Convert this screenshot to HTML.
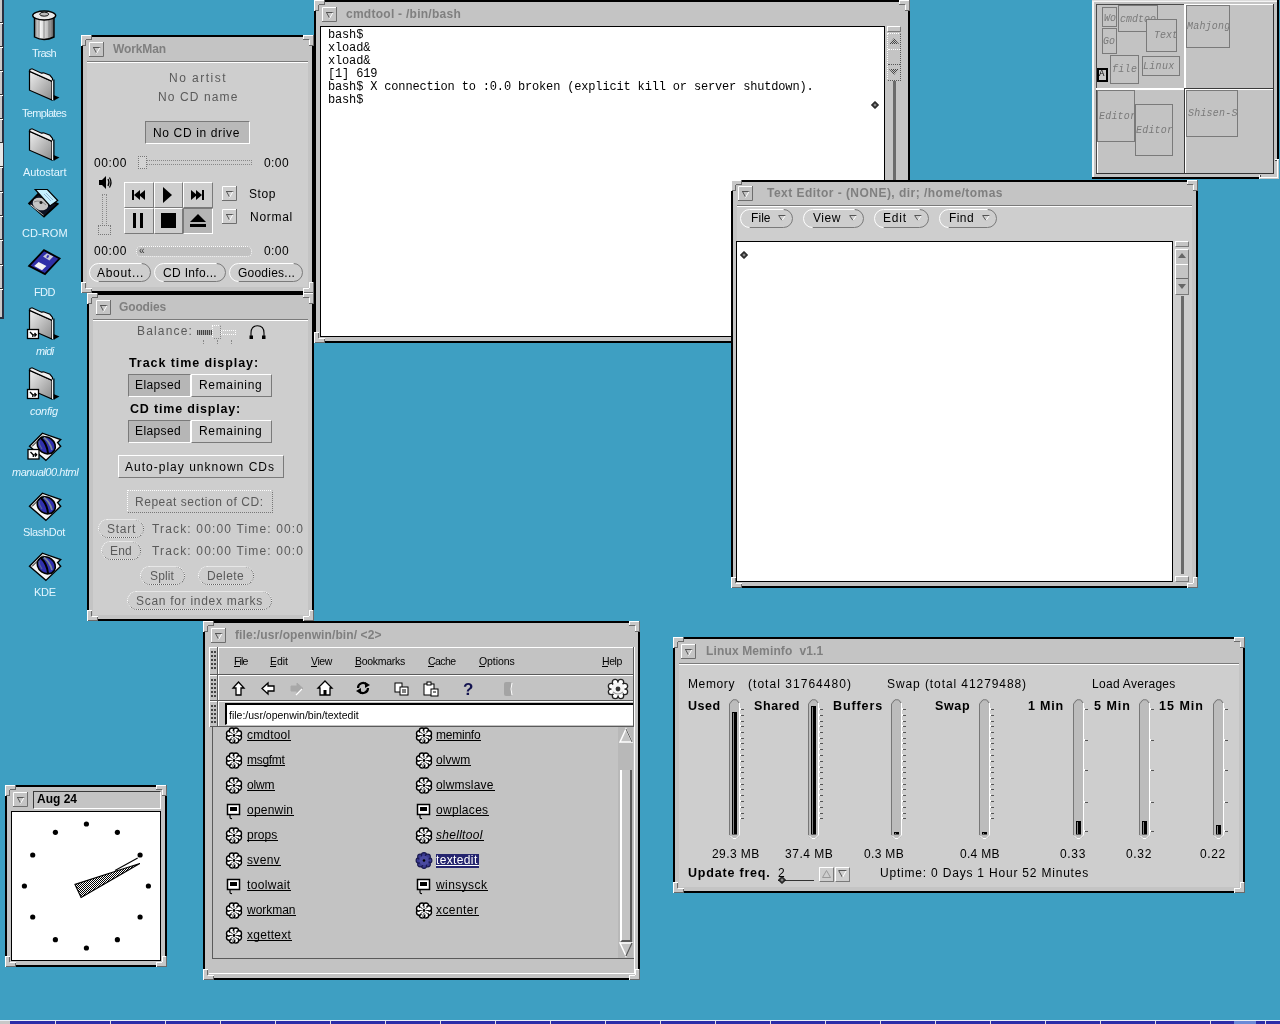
<!DOCTYPE html>
<html><head><meta charset="utf-8"><title>desktop</title>
<style>
html,body{margin:0;padding:0;}
body{width:1280px;height:1024px;overflow:hidden;position:relative;background:#3e9fc2;font-family:"Liberation Sans",sans-serif;}
.a{position:absolute;}
.t{position:absolute;white-space:pre;line-height:1;will-change:transform;}
svg.a{overflow:visible;}
</style></head><body>
<div class="a" style="left:0px;top:0px;width:3px;height:318px;background:#c9c9c9"></div><div class="a" style="left:2px;top:0px;width:2px;height:318px;background:#2a3040"></div><div class="a" style="left:0px;top:22px;width:3px;height:1px;background:#333"></div><div class="a" style="left:0px;top:23px;width:3px;height:1px;background:#fff"></div><div class="a" style="left:0px;top:46px;width:3px;height:1px;background:#333"></div><div class="a" style="left:0px;top:47px;width:3px;height:1px;background:#fff"></div><div class="a" style="left:0px;top:70px;width:3px;height:1px;background:#333"></div><div class="a" style="left:0px;top:71px;width:3px;height:1px;background:#fff"></div><div class="a" style="left:0px;top:94px;width:3px;height:1px;background:#333"></div><div class="a" style="left:0px;top:95px;width:3px;height:1px;background:#fff"></div><div class="a" style="left:0px;top:118px;width:3px;height:1px;background:#333"></div><div class="a" style="left:0px;top:119px;width:3px;height:1px;background:#fff"></div><div class="a" style="left:0px;top:142px;width:3px;height:1px;background:#333"></div><div class="a" style="left:0px;top:143px;width:3px;height:1px;background:#fff"></div><div class="a" style="left:0px;top:166px;width:3px;height:1px;background:#333"></div><div class="a" style="left:0px;top:167px;width:3px;height:1px;background:#fff"></div><div class="a" style="left:0px;top:191px;width:3px;height:1px;background:#333"></div><div class="a" style="left:0px;top:192px;width:3px;height:1px;background:#fff"></div><div class="a" style="left:0px;top:215px;width:3px;height:1px;background:#333"></div><div class="a" style="left:0px;top:216px;width:3px;height:1px;background:#fff"></div><div class="a" style="left:0px;top:239px;width:3px;height:1px;background:#333"></div><div class="a" style="left:0px;top:240px;width:3px;height:1px;background:#fff"></div><div class="a" style="left:0px;top:264px;width:3px;height:1px;background:#333"></div><div class="a" style="left:0px;top:265px;width:3px;height:1px;background:#fff"></div><div class="a" style="left:0px;top:288px;width:3px;height:1px;background:#333"></div><div class="a" style="left:0px;top:289px;width:3px;height:1px;background:#fff"></div><div class="a" style="left:0px;top:143px;width:3px;height:23px;background:#e8e8e8"></div><div class="a" style="left:0px;top:317px;width:4px;height:2px;background:#2a3040"></div><div class="a" style="left:0px;top:1020px;width:1280px;height:4px;background:#2c2ca8"></div><div class="a" style="left:0px;top:1020px;width:1280px;height:1px;background:#e8f0f8"></div><div class="a" style="left:0px;top:1021px;width:10px;height:3px;background:#c8c8c8"></div><div class="a" style="left:55px;top:1021px;width:1px;height:3px;background:#e0e0e0"></div><div class="a" style="left:110px;top:1021px;width:1px;height:3px;background:#e0e0e0"></div><div class="a" style="left:165px;top:1021px;width:1px;height:3px;background:#e0e0e0"></div><div class="a" style="left:220px;top:1021px;width:1px;height:3px;background:#e0e0e0"></div><div class="a" style="left:275px;top:1021px;width:1px;height:3px;background:#e0e0e0"></div><div class="a" style="left:330px;top:1021px;width:1px;height:3px;background:#e0e0e0"></div><div class="a" style="left:385px;top:1021px;width:1px;height:3px;background:#e0e0e0"></div><div class="a" style="left:440px;top:1021px;width:1px;height:3px;background:#e0e0e0"></div><div class="a" style="left:495px;top:1021px;width:1px;height:3px;background:#e0e0e0"></div><div class="a" style="left:550px;top:1021px;width:1px;height:3px;background:#e0e0e0"></div><div class="a" style="left:605px;top:1021px;width:1px;height:3px;background:#e0e0e0"></div><div class="a" style="left:660px;top:1021px;width:1px;height:3px;background:#e0e0e0"></div><div class="a" style="left:715px;top:1021px;width:1px;height:3px;background:#e0e0e0"></div><div class="a" style="left:770px;top:1021px;width:1px;height:3px;background:#e0e0e0"></div><div class="a" style="left:825px;top:1021px;width:1px;height:3px;background:#e0e0e0"></div><div class="a" style="left:880px;top:1021px;width:1px;height:3px;background:#e0e0e0"></div><div class="a" style="left:935px;top:1021px;width:1px;height:3px;background:#e0e0e0"></div><div class="a" style="left:990px;top:1021px;width:1px;height:3px;background:#e0e0e0"></div><div class="a" style="left:1045px;top:1021px;width:1px;height:3px;background:#e0e0e0"></div><div class="a" style="left:1100px;top:1021px;width:1px;height:3px;background:#e0e0e0"></div><div class="a" style="left:1155px;top:1021px;width:1px;height:3px;background:#e0e0e0"></div><div class="a" style="left:1210px;top:1021px;width:1px;height:3px;background:#e0e0e0"></div><div class="a" style="left:1265px;top:1021px;width:1px;height:3px;background:#e0e0e0"></div><div class="a" style="left:1234px;top:1021px;width:22px;height:3px;background:#6a8ad8"></div><div class="t" style="left:32px;top:47.69px;font-size:11px;font-weight:400;font-style:normal;color:#e4f6ff;letter-spacing:-0.742px;font-family:'Liberation Sans',sans-serif;">Trash</div><div class="t" style="left:22px;top:107.69px;font-size:11px;font-weight:400;font-style:normal;color:#e4f6ff;letter-spacing:-0.681px;font-family:'Liberation Sans',sans-serif;">Templates</div><div class="t" style="left:22.9px;top:167.29px;font-size:11px;font-weight:400;font-style:normal;color:#e4f6ff;letter-spacing:-0.069px;font-family:'Liberation Sans',sans-serif;">Autostart</div><div class="t" style="left:21.7px;top:227.59px;font-size:11px;font-weight:400;font-style:normal;color:#e4f6ff;letter-spacing:0.081px;font-family:'Liberation Sans',sans-serif;">CD-ROM</div><div class="t" style="left:34.3px;top:287.29px;font-size:11px;font-weight:400;font-style:normal;color:#e4f6ff;letter-spacing:-0.636px;font-family:'Liberation Sans',sans-serif;">FDD</div><div class="t" style="left:35.8px;top:346.39px;font-size:11px;font-weight:400;font-style:italic;color:#e4f6ff;letter-spacing:-0.642px;font-family:'Liberation Sans',sans-serif;">midi</div><div class="t" style="left:30px;top:406.49px;font-size:11px;font-weight:400;font-style:italic;color:#e4f6ff;letter-spacing:-0.259px;font-family:'Liberation Sans',sans-serif;">config</div><div class="t" style="left:11.5px;top:466.69px;font-size:11px;font-weight:400;font-style:italic;color:#e4f6ff;letter-spacing:-0.457px;font-family:'Liberation Sans',sans-serif;">manual00.html</div><div class="t" style="left:23.2px;top:526.69px;font-size:11px;font-weight:400;font-style:normal;color:#e4f6ff;letter-spacing:-0.342px;font-family:'Liberation Sans',sans-serif;">SlashDot</div><div class="t" style="left:33.7px;top:586.69px;font-size:11px;font-weight:400;font-style:normal;color:#e4f6ff;letter-spacing:-0.306px;font-family:'Liberation Sans',sans-serif;">KDE</div><svg class="a" style="left:31px;top:9px;" width="27" height="33" viewBox="0 0 27 33"><defs><linearGradient id="tg" x1="0" x2="1"><stop offset="0" stop-color="#888"/><stop offset="0.3" stop-color="#f4f4f4"/><stop offset="0.7" stop-color="#bbb"/><stop offset="1" stop-color="#555"/></linearGradient></defs><path d="M3.5,7 V28 Q13,33 23,28 V7 Z" fill="url(#tg)" stroke="#000" stroke-width="1.4"/><path d="M8,10 V29 M13,11 V30 M18,10 V29" stroke="#777" stroke-width="0.8"/><ellipse cx="13.2" cy="6.5" rx="11.5" ry="4.5" fill="#e8e8e8" stroke="#000" stroke-width="1.4"/><ellipse cx="13.2" cy="5.2" rx="4.5" ry="2" fill="#bbb" stroke="#000" stroke-width="0.9"/></svg><svg class="a" style="left:24px;top:60.5px;" width="40" height="42" viewBox="0 0 40 42"><defs><linearGradient id="fg" x1="0" y1="0" x2="1" y2="1"><stop offset="0" stop-color="#f0f0f0"/><stop offset="1" stop-color="#8c8c8c"/></linearGradient></defs><polygon points="29.5,34 35.5,36.5 30,39.5" fill="#000"/><polygon points="5.5,10.3 28,20.2 28,39.1 5.5,29.2" fill="url(#fg)" stroke="#000" stroke-width="1.2"/><polygon points="6,8.5 8,7.8 17.5,12.2 19.5,11.8 26,14.3 28.5,17.5 28.5,20.5 5.5,10.3" fill="#eee" stroke="#000" stroke-width="1.2"/><rect x="28" y="19.5" width="1.3" height="19.5" fill="#f0f0f0"/><rect x="29.3" y="18.5" width="1.2" height="21" fill="#000"/></svg><svg class="a" style="left:24px;top:120.5px;" width="40" height="42" viewBox="0 0 40 42"><defs><linearGradient id="fg" x1="0" y1="0" x2="1" y2="1"><stop offset="0" stop-color="#f0f0f0"/><stop offset="1" stop-color="#8c8c8c"/></linearGradient></defs><polygon points="29.5,34 35.5,36.5 30,39.5" fill="#000"/><polygon points="5.5,10.3 28,20.2 28,39.1 5.5,29.2" fill="url(#fg)" stroke="#000" stroke-width="1.2"/><polygon points="6,8.5 8,7.8 17.5,12.2 19.5,11.8 26,14.3 28.5,17.5 28.5,20.5 5.5,10.3" fill="#eee" stroke="#000" stroke-width="1.2"/><rect x="28" y="19.5" width="1.3" height="19.5" fill="#f0f0f0"/><rect x="29.3" y="18.5" width="1.2" height="21" fill="#000"/></svg><svg class="a" style="left:24px;top:300px;" width="40" height="42" viewBox="0 0 40 42"><defs><linearGradient id="fg" x1="0" y1="0" x2="1" y2="1"><stop offset="0" stop-color="#f0f0f0"/><stop offset="1" stop-color="#8c8c8c"/></linearGradient></defs><polygon points="29.5,34 35.5,36.5 30,39.5" fill="#000"/><polygon points="5.5,10.3 28,20.2 28,39.1 5.5,29.2" fill="url(#fg)" stroke="#000" stroke-width="1.2"/><polygon points="6,8.5 8,7.8 17.5,12.2 19.5,11.8 26,14.3 28.5,17.5 28.5,20.5 5.5,10.3" fill="#eee" stroke="#000" stroke-width="1.2"/><rect x="28" y="19.5" width="1.3" height="19.5" fill="#f0f0f0"/><rect x="29.3" y="18.5" width="1.2" height="21" fill="#000"/><rect x="3.5" y="29.5" width="11" height="9" fill="#fff" stroke="#000" stroke-width="1.3"/><path d="M6,32 L8.8,34.8 L12.2,34.8 M10.5,33 L12.2,34.8 L10.5,36.6 M8.8,34.8 V37" fill="none" stroke="#000" stroke-width="1.3"/></svg><svg class="a" style="left:24px;top:360px;" width="40" height="42" viewBox="0 0 40 42"><defs><linearGradient id="fg" x1="0" y1="0" x2="1" y2="1"><stop offset="0" stop-color="#f0f0f0"/><stop offset="1" stop-color="#8c8c8c"/></linearGradient></defs><polygon points="29.5,34 35.5,36.5 30,39.5" fill="#000"/><polygon points="5.5,10.3 28,20.2 28,39.1 5.5,29.2" fill="url(#fg)" stroke="#000" stroke-width="1.2"/><polygon points="6,8.5 8,7.8 17.5,12.2 19.5,11.8 26,14.3 28.5,17.5 28.5,20.5 5.5,10.3" fill="#eee" stroke="#000" stroke-width="1.2"/><rect x="28" y="19.5" width="1.3" height="19.5" fill="#f0f0f0"/><rect x="29.3" y="18.5" width="1.2" height="21" fill="#000"/><rect x="3.5" y="29.5" width="11" height="9" fill="#fff" stroke="#000" stroke-width="1.3"/><path d="M6,32 L8.8,34.8 L12.2,34.8 M10.5,33 L12.2,34.8 L10.5,36.6 M8.8,34.8 V37" fill="none" stroke="#000" stroke-width="1.3"/></svg><svg class="a" style="left:24px;top:180px;" width="40" height="42" viewBox="0 0 40 42"><polygon points="5.1,23.4 14,14 33.7,24 20,36.6" fill="#0c1224" stroke="#000" stroke-width="1.8"/><polygon points="7,24.5 19,34.5 20,36 6,25" fill="#ddd"/><ellipse cx="16.5" cy="24" rx="8" ry="6" transform="rotate(20 16.5 24)" fill="#c4c4c4"/><path d="M10,22 Q16,19 22,25" stroke="#888" fill="none"/><circle cx="17" cy="22.5" r="1.5" fill="#222"/><polygon points="11.2,9.5 23.4,9.5 33.7,20.5 26,26" fill="#c4f0ff" stroke="#000" stroke-width="1.2"/><path d="M20,14 L27,21 M22,13 L29,20" stroke="#8ac" stroke-width="0.8"/></svg><svg class="a" style="left:24px;top:245px;" width="40" height="32" viewBox="0 0 40 32"><polygon points="5.1,20.9 20,5.2 35.6,13.5 21,29.1" fill="#3030a8" stroke="#000" stroke-width="1.8"/><polygon points="10.2,20.9 14.6,17 22.4,21 18,25.2" fill="#f4f4f4"/><polygon points="19,11.6 23,8.2 29.3,11.6 25.4,15.5" fill="#c8c8d8"/><rect x="23" y="10" width="2" height="3" fill="#3838b4" transform="rotate(30 24 11)"/></svg><svg class="a" style="left:24px;top:425px;" width="42" height="40" viewBox="0 0 42 40"><polygon points="5.5,21.3 18.4,8.2 36.7,14.5 33.6,17.6 36.7,21.3 21.9,35.4" fill="#f4f4f4" stroke="#000" stroke-width="1.4"/><path d="M8,21.5 L19,10.5" stroke="#000" stroke-width="1"/><ellipse cx="22.3" cy="20.3" rx="9.5" ry="8" transform="rotate(35 22.3 20.3)" fill="#3030b0" stroke="#000" stroke-width="1.6"/><path d="M17,13 Q23,19 24,28" stroke="#000" stroke-width="2" fill="none"/><path d="M20,12.5 Q26,17 28,25" stroke="#7a8a98" stroke-width="1.8" fill="none"/><path d="M15,16 Q15,20 18,24" stroke="#5a6a90" stroke-width="1.2" fill="none"/><rect x="4" y="24.5" width="11" height="9.5" fill="#fff" stroke="#000" stroke-width="1.3"/><path d="M6.5,27 L9.3,29.8 L12.7,29.8 M11,28 L12.7,29.8 L11,31.6 M9.3,29.8 V32" fill="none" stroke="#000" stroke-width="1.3"/></svg><svg class="a" style="left:24px;top:485px;" width="42" height="40" viewBox="0 0 42 40"><polygon points="5.5,21.3 18.4,8.2 36.7,14.5 33.6,17.6 36.7,21.3 21.9,35.4" fill="#f4f4f4" stroke="#000" stroke-width="1.4"/><path d="M8,21.5 L19,10.5" stroke="#000" stroke-width="1"/><ellipse cx="22.3" cy="20.3" rx="9.5" ry="8" transform="rotate(35 22.3 20.3)" fill="#3030b0" stroke="#000" stroke-width="1.6"/><path d="M17,13 Q23,19 24,28" stroke="#000" stroke-width="2" fill="none"/><path d="M20,12.5 Q26,17 28,25" stroke="#7a8a98" stroke-width="1.8" fill="none"/><path d="M15,16 Q15,20 18,24" stroke="#5a6a90" stroke-width="1.2" fill="none"/></svg><svg class="a" style="left:24px;top:545px;" width="42" height="40" viewBox="0 0 42 40"><polygon points="5.5,21.3 18.4,8.2 36.7,14.5 33.6,17.6 36.7,21.3 21.9,35.4" fill="#f4f4f4" stroke="#000" stroke-width="1.4"/><path d="M8,21.5 L19,10.5" stroke="#000" stroke-width="1"/><ellipse cx="22.3" cy="20.3" rx="9.5" ry="8" transform="rotate(35 22.3 20.3)" fill="#3030b0" stroke="#000" stroke-width="1.6"/><path d="M17,13 Q23,19 24,28" stroke="#000" stroke-width="2" fill="none"/><path d="M20,12.5 Q26,17 28,25" stroke="#7a8a98" stroke-width="1.8" fill="none"/><path d="M15,16 Q15,20 18,24" stroke="#5a6a90" stroke-width="1.2" fill="none"/></svg><div class="a" style="left:81px;top:35px;width:233px;height:258px;box-sizing:border-box;border:2px solid #000;background:#c4c4c4"></div><svg class="a" style="left:89px;top:42px;" width="15" height="15" viewBox="0 0 15 15"><rect x="0" y="0" width="15" height="15" fill="#c4c4c4" fill-opacity="0"/><polyline points="0.5,15 0.5,0.5 15,0.5" fill="none" stroke="#fff"/><polyline points="14.5,0 14.5,14.5 0,14.5" fill="none" stroke="#6e6e6e"/><polyline points="4,5.5 11.5,5.5" fill="none" stroke="#555"/><polyline points="4.5,5.5 7.5,11" fill="none" stroke="#555"/><polyline points="11,5.5 7.5,11.5" fill="none" stroke="#fff"/></svg><div class="t" style="left:113px;top:43.34px;font-size:12px;font-weight:700;font-style:normal;color:#7f7f7f;letter-spacing:-0.112px;font-family:'Liberation Sans',sans-serif;">WorkMan</div><div class="a" style="left:87px;top:61px;width:221px;height:226px;background:#cecece"></div><div class="a" style="left:87px;top:61px;width:221px;height:1px;background:#7a7a7a"></div><div class="a" style="left:87px;top:62px;width:221px;height:1px;background:#fff"></div><svg class="a" style="left:81px;top:35px;" width="11" height="11" viewBox="0 0 11 11"><polygon points="0,0 11,0 11,5 5,5 5,11 0,11" fill="#c8c8c8"/><line x1="0.0" y1="0.5" x2="11.0" y2="0.5" stroke="#ffffff" stroke-width="1"/><line x1="10.5" y1="0.0" x2="10.5" y2="5.0" stroke="#6a6a6a" stroke-width="1"/><line x1="11.0" y1="4.5" x2="5.0" y2="4.5" stroke="#6a6a6a" stroke-width="1"/><line x1="4.5" y1="5.0" x2="4.5" y2="11.0" stroke="#6a6a6a" stroke-width="1"/><line x1="5.0" y1="10.5" x2="0.0" y2="10.5" stroke="#6a6a6a" stroke-width="1"/><line x1="0.5" y1="11.0" x2="0.5" y2="0.0" stroke="#ffffff" stroke-width="1"/></svg><svg class="a" style="left:303px;top:35px;" width="11" height="11" viewBox="0 0 11 11"><polygon points="11,0 0,0 0,5 6,5 6,11 11,11" fill="#c8c8c8"/><line x1="11.0" y1="0.5" x2="0.0" y2="0.5" stroke="#ffffff" stroke-width="1"/><line x1="0.5" y1="0.0" x2="0.5" y2="5.0" stroke="#ffffff" stroke-width="1"/><line x1="0.0" y1="4.5" x2="6.0" y2="4.5" stroke="#6a6a6a" stroke-width="1"/><line x1="6.5" y1="5.0" x2="6.5" y2="11.0" stroke="#ffffff" stroke-width="1"/><line x1="6.0" y1="10.5" x2="11.0" y2="10.5" stroke="#6a6a6a" stroke-width="1"/><line x1="10.5" y1="11.0" x2="10.5" y2="0.0" stroke="#6a6a6a" stroke-width="1"/></svg><svg class="a" style="left:81px;top:282px;" width="11" height="11" viewBox="0 0 11 11"><polygon points="0,11 11,11 11,6 5,6 5,0 0,0" fill="#c8c8c8"/><line x1="0.0" y1="10.5" x2="11.0" y2="10.5" stroke="#6a6a6a" stroke-width="1"/><line x1="10.5" y1="11.0" x2="10.5" y2="6.0" stroke="#6a6a6a" stroke-width="1"/><line x1="11.0" y1="6.5" x2="5.0" y2="6.5" stroke="#ffffff" stroke-width="1"/><line x1="4.5" y1="6.0" x2="4.5" y2="0.0" stroke="#6a6a6a" stroke-width="1"/><line x1="5.0" y1="0.5" x2="0.0" y2="0.5" stroke="#ffffff" stroke-width="1"/><line x1="0.5" y1="0.0" x2="0.5" y2="11.0" stroke="#ffffff" stroke-width="1"/></svg><svg class="a" style="left:303px;top:282px;" width="11" height="11" viewBox="0 0 11 11"><polygon points="11,11 0,11 0,6 6,6 6,0 11,0" fill="#c8c8c8"/><line x1="11.0" y1="10.5" x2="0.0" y2="10.5" stroke="#6a6a6a" stroke-width="1"/><line x1="0.5" y1="11.0" x2="0.5" y2="6.0" stroke="#ffffff" stroke-width="1"/><line x1="0.0" y1="6.5" x2="6.0" y2="6.5" stroke="#ffffff" stroke-width="1"/><line x1="6.5" y1="6.0" x2="6.5" y2="0.0" stroke="#ffffff" stroke-width="1"/><line x1="6.0" y1="0.5" x2="11.0" y2="0.5" stroke="#ffffff" stroke-width="1"/><line x1="10.5" y1="0.0" x2="10.5" y2="11.0" stroke="#6a6a6a" stroke-width="1"/></svg><div class="t" style="left:169px;top:71.84px;font-size:12px;font-weight:400;font-style:normal;color:#5a5a5a;letter-spacing:1.480px;font-family:'Liberation Sans',sans-serif;">No artist</div><div class="t" style="left:158px;top:90.84px;font-size:12px;font-weight:400;font-style:normal;color:#5a5a5a;letter-spacing:1.115px;font-family:'Liberation Sans',sans-serif;">No CD name</div><div class="a" style="left:145px;top:121px;width:105px;height:23px;box-sizing:border-box;border-top:1px solid #7a7a7a;border-left:1px solid #7a7a7a;border-bottom:1px solid #fff;border-right:1px solid #fff;background:#b9b9b9;"></div><div class="t" style="left:153px;top:126.84px;font-size:12px;font-weight:400;font-style:normal;color:#000;letter-spacing:0.641px;font-family:'Liberation Sans',sans-serif;">No CD in drive</div><div class="t" style="left:94px;top:156.84px;font-size:12px;font-weight:400;font-style:normal;color:#000;letter-spacing:0.595px;font-family:'Liberation Sans',sans-serif;">00:00</div><div class="t" style="left:264px;top:156.84px;font-size:12px;font-weight:400;font-style:normal;color:#000;letter-spacing:0.412px;font-family:'Liberation Sans',sans-serif;">0:00</div><div class="a" style="left:140px;top:160px;width:112px;height:5px;box-sizing:border-box;border:1px dotted #888;"></div><div class="a" style="left:138px;top:156px;width:9px;height:13px;box-sizing:border-box;border:1px dotted #777;background:#d4d4d4"></div><svg class="a" style="left:98px;top:175px;" width="15" height="15" viewBox="0 0 15 15"><path d="M1,5 H4 L8,1 V14 L4,10 H1 Z" fill="#000"/><path d="M10,4 Q12,7.5 10,11 M11.5,2.5 Q14.5,7.5 11.5,12.5" fill="none" stroke="#000" stroke-width="1.2"/></svg><div class="a" style="left:102px;top:194px;width:5px;height:32px;box-sizing:border-box;border:1px dotted #888;"></div><div class="a" style="left:98px;top:225px;width:13px;height:10px;box-sizing:border-box;border:1px dotted #777;"></div><div class="a" style="left:124px;top:182px;width:30px;height:26px;box-sizing:border-box;border-top:1px solid #fff;border-left:1px solid #fff;border-bottom:1px solid #7a7a7a;border-right:1px solid #7a7a7a;background:#cecece;"></div><div class="a" style="left:154px;top:182px;width:29px;height:26px;box-sizing:border-box;border-top:1px solid #fff;border-left:1px solid #fff;border-bottom:1px solid #7a7a7a;border-right:1px solid #7a7a7a;background:#cecece;"></div><div class="a" style="left:183px;top:182px;width:30px;height:26px;box-sizing:border-box;border-top:1px solid #fff;border-left:1px solid #fff;border-bottom:1px solid #7a7a7a;border-right:1px solid #7a7a7a;background:#cecece;"></div><div class="a" style="left:124px;top:208px;width:30px;height:26px;box-sizing:border-box;border-top:1px solid #fff;border-left:1px solid #fff;border-bottom:1px solid #7a7a7a;border-right:1px solid #7a7a7a;background:#cecece;"></div><div class="a" style="left:154px;top:208px;width:29px;height:26px;box-sizing:border-box;border-top:1px solid #fff;border-left:1px solid #fff;border-bottom:1px solid #7a7a7a;border-right:1px solid #7a7a7a;background:#cecece;"></div><div class="a" style="left:183px;top:208px;width:30px;height:26px;box-sizing:border-box;border-top:1px solid #7a7a7a;border-left:1px solid #7a7a7a;border-bottom:1px solid #fff;border-right:1px solid #fff;background:#b5b5b5;"></div><svg class="a" style="left:131px;top:188px;" width="16" height="14" viewBox="0 0 16 14"><rect x="1" y="2" width="2" height="10" fill="#000"/><polygon points="3,7 9,2 9,12" fill="#000"/><polygon points="8,7 14,2 14,12" fill="#000"/></svg><svg class="a" style="left:161px;top:187px;" width="14" height="16" viewBox="0 0 14 16"><polygon points="2,0 11,8 2,16" fill="#000"/></svg><svg class="a" style="left:189px;top:188px;" width="16" height="14" viewBox="0 0 16 14"><rect x="13" y="2" width="2" height="10" fill="#000"/><polygon points="13,7 7,2 7,12" fill="#000"/><polygon points="8,7 2,2 2,12" fill="#000"/></svg><svg class="a" style="left:131px;top:212px;" width="14" height="17" viewBox="0 0 14 17"><rect x="2" y="1" width="3" height="15" fill="#000"/><rect x="9" y="1" width="3" height="15" fill="#000"/></svg><svg class="a" style="left:160px;top:212px;" width="16" height="17" viewBox="0 0 16 17"><rect x="1" y="1" width="15" height="15" fill="#000"/></svg><svg class="a" style="left:189px;top:213px;" width="18" height="16" viewBox="0 0 18 16"><polygon points="9,1 17,9 1,9" fill="#000"/><rect x="1" y="11" width="16" height="3" fill="#000"/></svg><svg class="a" style="left:222px;top:186px;" width="15" height="15" viewBox="0 0 15 15"><rect x="0" y="0" width="15" height="15" fill="#c4c4c4" fill-opacity="0"/><polyline points="0.5,15 0.5,0.5 15,0.5" fill="none" stroke="#fff"/><polyline points="14.5,0 14.5,14.5 0,14.5" fill="none" stroke="#6e6e6e"/><polyline points="4,5.5 11.5,5.5" fill="none" stroke="#555"/><polyline points="4.5,5.5 7.5,11" fill="none" stroke="#555"/><polyline points="11,5.5 7.5,11.5" fill="none" stroke="#fff"/></svg><svg class="a" style="left:222px;top:209px;" width="15" height="15" viewBox="0 0 15 15"><rect x="0" y="0" width="15" height="15" fill="#c4c4c4" fill-opacity="0"/><polyline points="0.5,15 0.5,0.5 15,0.5" fill="none" stroke="#fff"/><polyline points="14.5,0 14.5,14.5 0,14.5" fill="none" stroke="#6e6e6e"/><polyline points="4,5.5 11.5,5.5" fill="none" stroke="#555"/><polyline points="4.5,5.5 7.5,11" fill="none" stroke="#555"/><polyline points="11,5.5 7.5,11.5" fill="none" stroke="#fff"/></svg><div class="t" style="left:249px;top:188.34px;font-size:12px;font-weight:400;font-style:normal;color:#000;letter-spacing:0.579px;font-family:'Liberation Sans',sans-serif;">Stop</div><div class="t" style="left:250px;top:210.84px;font-size:12px;font-weight:400;font-style:normal;color:#000;letter-spacing:0.722px;font-family:'Liberation Sans',sans-serif;">Normal</div><div class="t" style="left:94px;top:244.84px;font-size:12px;font-weight:400;font-style:normal;color:#000;letter-spacing:0.595px;font-family:'Liberation Sans',sans-serif;">00:00</div><div class="t" style="left:264px;top:244.84px;font-size:12px;font-weight:400;font-style:normal;color:#000;letter-spacing:0.412px;font-family:'Liberation Sans',sans-serif;">0:00</div><div class="a" style="left:136px;top:246px;width:116px;height:11px;box-sizing:border-box;border:1px dotted #fff;border-radius:5px;background:#c2c2c2"></div><div class="t" style="left:139px;top:245.53px;font-size:10px;font-weight:400;font-style:normal;color:#333;letter-spacing:0.000px;font-family:'Liberation Sans',sans-serif;">«</div><svg class="a" style="left:89px;top:263px;" width="62" height="19" viewBox="0 0 62 19"><path d="M9.5,18.5 H52.5 A9.0,9.0 0 0 0 52.5,0.5" fill="none" stroke="#7a7a7a"/><path d="M52.5,0.5 H9.5 A9.0,9.0 0 0 0 9.5,18.5" fill="none" stroke="#fff"/></svg><div class="t" style="left:97px;top:266.84px;font-size:12px;font-weight:400;font-style:normal;color:#000;letter-spacing:0.705px;font-family:'Liberation Sans',sans-serif;">About...</div><svg class="a" style="left:154px;top:263px;" width="72" height="19" viewBox="0 0 72 19"><path d="M9.5,18.5 H62.5 A9.0,9.0 0 0 0 62.5,0.5" fill="none" stroke="#7a7a7a"/><path d="M62.5,0.5 H9.5 A9.0,9.0 0 0 0 9.5,18.5" fill="none" stroke="#fff"/></svg><div class="t" style="left:163px;top:266.84px;font-size:12px;font-weight:400;font-style:normal;color:#000;letter-spacing:0.332px;font-family:'Liberation Sans',sans-serif;">CD Info...</div><svg class="a" style="left:229px;top:263px;" width="74" height="19" viewBox="0 0 74 19"><path d="M9.5,18.5 H64.5 A9.0,9.0 0 0 0 64.5,0.5" fill="none" stroke="#7a7a7a"/><path d="M64.5,0.5 H9.5 A9.0,9.0 0 0 0 9.5,18.5" fill="none" stroke="#fff"/></svg><div class="t" style="left:238px;top:266.84px;font-size:12px;font-weight:400;font-style:normal;color:#000;letter-spacing:0.231px;font-family:'Liberation Sans',sans-serif;">Goodies...</div><div class="a" style="left:87px;top:293px;width:227px;height:328px;box-sizing:border-box;border:2px solid #000;background:#c4c4c4"></div><svg class="a" style="left:96px;top:300px;" width="15" height="15" viewBox="0 0 15 15"><rect x="0" y="0" width="15" height="15" fill="#c4c4c4" fill-opacity="0"/><polyline points="0.5,15 0.5,0.5 15,0.5" fill="none" stroke="#fff"/><polyline points="14.5,0 14.5,14.5 0,14.5" fill="none" stroke="#6e6e6e"/><polyline points="4,5.5 11.5,5.5" fill="none" stroke="#555"/><polyline points="4.5,5.5 7.5,11" fill="none" stroke="#555"/><polyline points="11,5.5 7.5,11.5" fill="none" stroke="#fff"/></svg><div class="t" style="left:119px;top:300.84px;font-size:12px;font-weight:700;font-style:normal;color:#7f7f7f;letter-spacing:-0.143px;font-family:'Liberation Sans',sans-serif;">Goodies</div><div class="a" style="left:93px;top:319px;width:215px;height:296px;background:#cecece"></div><div class="a" style="left:93px;top:319px;width:215px;height:1px;background:#7a7a7a"></div><div class="a" style="left:93px;top:320px;width:215px;height:1px;background:#fff"></div><svg class="a" style="left:87px;top:293px;" width="11" height="11" viewBox="0 0 11 11"><polygon points="0,0 11,0 11,5 5,5 5,11 0,11" fill="#c8c8c8"/><line x1="0.0" y1="0.5" x2="11.0" y2="0.5" stroke="#ffffff" stroke-width="1"/><line x1="10.5" y1="0.0" x2="10.5" y2="5.0" stroke="#6a6a6a" stroke-width="1"/><line x1="11.0" y1="4.5" x2="5.0" y2="4.5" stroke="#6a6a6a" stroke-width="1"/><line x1="4.5" y1="5.0" x2="4.5" y2="11.0" stroke="#6a6a6a" stroke-width="1"/><line x1="5.0" y1="10.5" x2="0.0" y2="10.5" stroke="#6a6a6a" stroke-width="1"/><line x1="0.5" y1="11.0" x2="0.5" y2="0.0" stroke="#ffffff" stroke-width="1"/></svg><svg class="a" style="left:303px;top:293px;" width="11" height="11" viewBox="0 0 11 11"><polygon points="11,0 0,0 0,5 6,5 6,11 11,11" fill="#c8c8c8"/><line x1="11.0" y1="0.5" x2="0.0" y2="0.5" stroke="#ffffff" stroke-width="1"/><line x1="0.5" y1="0.0" x2="0.5" y2="5.0" stroke="#ffffff" stroke-width="1"/><line x1="0.0" y1="4.5" x2="6.0" y2="4.5" stroke="#6a6a6a" stroke-width="1"/><line x1="6.5" y1="5.0" x2="6.5" y2="11.0" stroke="#ffffff" stroke-width="1"/><line x1="6.0" y1="10.5" x2="11.0" y2="10.5" stroke="#6a6a6a" stroke-width="1"/><line x1="10.5" y1="11.0" x2="10.5" y2="0.0" stroke="#6a6a6a" stroke-width="1"/></svg><svg class="a" style="left:87px;top:610px;" width="11" height="11" viewBox="0 0 11 11"><polygon points="0,11 11,11 11,6 5,6 5,0 0,0" fill="#c8c8c8"/><line x1="0.0" y1="10.5" x2="11.0" y2="10.5" stroke="#6a6a6a" stroke-width="1"/><line x1="10.5" y1="11.0" x2="10.5" y2="6.0" stroke="#6a6a6a" stroke-width="1"/><line x1="11.0" y1="6.5" x2="5.0" y2="6.5" stroke="#ffffff" stroke-width="1"/><line x1="4.5" y1="6.0" x2="4.5" y2="0.0" stroke="#6a6a6a" stroke-width="1"/><line x1="5.0" y1="0.5" x2="0.0" y2="0.5" stroke="#ffffff" stroke-width="1"/><line x1="0.5" y1="0.0" x2="0.5" y2="11.0" stroke="#ffffff" stroke-width="1"/></svg><svg class="a" style="left:303px;top:610px;" width="11" height="11" viewBox="0 0 11 11"><polygon points="11,11 0,11 0,6 6,6 6,0 11,0" fill="#c8c8c8"/><line x1="11.0" y1="10.5" x2="0.0" y2="10.5" stroke="#6a6a6a" stroke-width="1"/><line x1="0.5" y1="11.0" x2="0.5" y2="6.0" stroke="#ffffff" stroke-width="1"/><line x1="0.0" y1="6.5" x2="6.0" y2="6.5" stroke="#ffffff" stroke-width="1"/><line x1="6.5" y1="6.0" x2="6.5" y2="0.0" stroke="#ffffff" stroke-width="1"/><line x1="6.0" y1="0.5" x2="11.0" y2="0.5" stroke="#ffffff" stroke-width="1"/><line x1="10.5" y1="0.0" x2="10.5" y2="11.0" stroke="#6a6a6a" stroke-width="1"/></svg><div class="t" style="left:136.5px;top:325.44px;font-size:12px;font-weight:400;font-style:normal;color:#5a5a5a;letter-spacing:1.163px;font-family:'Liberation Sans',sans-serif;">Balance:</div><div class="a" style="left:197px;top:330px;width:15px;height:5px;background:repeating-linear-gradient(90deg,#444 0 1px,#aaa 1px 2px)"></div><div class="a" style="left:221px;top:330px;width:15px;height:5px;box-sizing:border-box;border:1px dotted #fff;"></div><div class="a" style="left:212px;top:325px;width:9px;height:14px;box-sizing:border-box;border:1px dotted #fff;border-right-color:#888;border-bottom-color:#888"></div><div class="a" style="left:203px;top:340px;width:1px;height:4px;border-left:1px dotted #888"></div><div class="a" style="left:217px;top:340px;width:1px;height:4px;border-left:1px dotted #888"></div><div class="a" style="left:231px;top:340px;width:1px;height:4px;border-left:1px dotted #888"></div><svg class="a" style="left:249px;top:325px;" width="17" height="15" viewBox="0 0 17 15"><path d="M2,12 V8 Q2,0.8 8.5,0.8 Q15,0.8 15,8 V12" fill="none" stroke="#000" stroke-width="1.1"/><rect x="0.5" y="10.5" width="3.5" height="3.5" fill="#000"/><rect x="13" y="10.5" width="3.5" height="3.5" fill="#000"/></svg><div class="t" style="left:129.4px;top:356.62px;font-size:12.5px;font-weight:700;font-style:normal;color:#000;letter-spacing:0.919px;font-family:'Liberation Sans',sans-serif;">Track time display:</div><div class="t" style="left:129.4px;top:357.04px;font-size:12px;font-weight:400;font-style:normal;color:#000;letter-spacing:0.000px;font-family:'Liberation Sans',sans-serif;"></div><div class="a" style="left:128px;top:374px;width:63px;height:23px;box-sizing:border-box;border-top:1px solid #7a7a7a;border-left:1px solid #7a7a7a;border-bottom:1px solid #fff;border-right:1px solid #fff;background:#b6b6b6;"></div><div class="a" style="left:191px;top:374px;width:81px;height:23px;box-sizing:border-box;border-top:1px solid #fff;border-left:1px solid #fff;border-bottom:1px solid #7a7a7a;border-right:1px solid #7a7a7a;background:#cecece;"></div><div class="t" style="left:135.3px;top:379.34px;font-size:12px;font-weight:400;font-style:normal;color:#000;letter-spacing:0.377px;font-family:'Liberation Sans',sans-serif;">Elapsed</div><div class="t" style="left:199.4px;top:379.34px;font-size:12px;font-weight:400;font-style:normal;color:#000;letter-spacing:0.660px;font-family:'Liberation Sans',sans-serif;">Remaining</div><div class="t" style="left:129.5px;top:403.17px;font-size:12.5px;font-weight:700;font-style:normal;color:#000;letter-spacing:0.817px;font-family:'Liberation Sans',sans-serif;">CD time display:</div><div class="a" style="left:128px;top:420px;width:63px;height:23px;box-sizing:border-box;border-top:1px solid #7a7a7a;border-left:1px solid #7a7a7a;border-bottom:1px solid #fff;border-right:1px solid #fff;background:#b6b6b6;"></div><div class="a" style="left:191px;top:420px;width:81px;height:23px;box-sizing:border-box;border-top:1px solid #fff;border-left:1px solid #fff;border-bottom:1px solid #7a7a7a;border-right:1px solid #7a7a7a;background:#cecece;"></div><div class="t" style="left:135.3px;top:425.34px;font-size:12px;font-weight:400;font-style:normal;color:#000;letter-spacing:0.377px;font-family:'Liberation Sans',sans-serif;">Elapsed</div><div class="t" style="left:199.4px;top:425.34px;font-size:12px;font-weight:400;font-style:normal;color:#000;letter-spacing:0.660px;font-family:'Liberation Sans',sans-serif;">Remaining</div><div class="a" style="left:118px;top:455px;width:166px;height:23px;box-sizing:border-box;border-top:1px solid #fff;border-left:1px solid #fff;border-bottom:1px solid #7a7a7a;border-right:1px solid #7a7a7a;background:#cecece;"></div><div class="t" style="left:125px;top:460.84px;font-size:12px;font-weight:400;font-style:normal;color:#000;letter-spacing:1.013px;font-family:'Liberation Sans',sans-serif;">Auto-play unknown CDs</div><div class="a" style="left:127px;top:490px;width:146px;height:23px;box-sizing:border-box;border:1px dotted #fff;border-right-color:#777;border-bottom-color:#777"></div><div class="t" style="left:135.3px;top:495.84px;font-size:12px;font-weight:400;font-style:normal;color:#5a5a5a;letter-spacing:0.529px;font-family:'Liberation Sans',sans-serif;">Repeat section of CD:</div><div class="a" style="left:98px;top:519px;width:46px;height:19px;box-sizing:border-box;border:1px dotted #fff;border-radius:9.5px;"></div><div class="a" style="left:99px;top:520px;width:45px;height:18px;box-sizing:border-box;border-right:1px dotted #555;border-bottom:1px dotted #555;border-radius:9.5px;"></div><div class="t" style="left:107px;top:522.84px;font-size:12px;font-weight:400;font-style:normal;color:#5a5a5a;letter-spacing:0.732px;font-family:'Liberation Sans',sans-serif;">Start</div><div class="t" style="left:151.5px;top:522.84px;font-size:12px;font-weight:400;font-style:normal;color:#5a5a5a;letter-spacing:1.155px;font-family:'Liberation Sans',sans-serif;width:151px;overflow:hidden;">Track: 00:00 Time: 00:00</div><div class="a" style="left:101px;top:541px;width:40px;height:19px;box-sizing:border-box;border:1px dotted #fff;border-radius:9.5px;"></div><div class="a" style="left:102px;top:542px;width:39px;height:18px;box-sizing:border-box;border-right:1px dotted #555;border-bottom:1px dotted #555;border-radius:9.5px;"></div><div class="t" style="left:110px;top:544.84px;font-size:12px;font-weight:400;font-style:normal;color:#5a5a5a;letter-spacing:0.216px;font-family:'Liberation Sans',sans-serif;">End</div><div class="t" style="left:151.5px;top:544.84px;font-size:12px;font-weight:400;font-style:normal;color:#5a5a5a;letter-spacing:1.155px;font-family:'Liberation Sans',sans-serif;width:151px;overflow:hidden;">Track: 00:00 Time: 00:00</div><div class="a" style="left:140px;top:566px;width:45px;height:19px;box-sizing:border-box;border:1px dotted #fff;border-radius:9.5px;"></div><div class="a" style="left:141px;top:567px;width:44px;height:18px;box-sizing:border-box;border-right:1px dotted #555;border-bottom:1px dotted #555;border-radius:9.5px;"></div><div class="t" style="left:150px;top:569.84px;font-size:12px;font-weight:400;font-style:normal;color:#5a5a5a;letter-spacing:0.131px;font-family:'Liberation Sans',sans-serif;">Split</div><div class="a" style="left:198px;top:566px;width:56px;height:19px;box-sizing:border-box;border:1px dotted #fff;border-radius:9.5px;"></div><div class="a" style="left:199px;top:567px;width:55px;height:18px;box-sizing:border-box;border-right:1px dotted #555;border-bottom:1px dotted #555;border-radius:9.5px;"></div><div class="t" style="left:207px;top:569.84px;font-size:12px;font-weight:400;font-style:normal;color:#5a5a5a;letter-spacing:0.386px;font-family:'Liberation Sans',sans-serif;">Delete</div><div class="a" style="left:127px;top:591px;width:145px;height:19px;box-sizing:border-box;border:1px dotted #fff;border-radius:9.5px;"></div><div class="a" style="left:128px;top:592px;width:144px;height:18px;box-sizing:border-box;border-right:1px dotted #555;border-bottom:1px dotted #555;border-radius:9.5px;"></div><div class="t" style="left:136px;top:594.84px;font-size:12px;font-weight:400;font-style:normal;color:#5a5a5a;letter-spacing:0.715px;font-family:'Liberation Sans',sans-serif;">Scan for index marks</div><div class="a" style="left:314px;top:0px;width:596px;height:343px;box-sizing:border-box;border:2px solid #000;background:#c4c4c4"></div><svg class="a" style="left:322px;top:7px;" width="15" height="15" viewBox="0 0 15 15"><rect x="0" y="0" width="15" height="15" fill="#c4c4c4" fill-opacity="0"/><polyline points="0.5,15 0.5,0.5 15,0.5" fill="none" stroke="#fff"/><polyline points="14.5,0 14.5,14.5 0,14.5" fill="none" stroke="#6e6e6e"/><polyline points="4,5.5 11.5,5.5" fill="none" stroke="#555"/><polyline points="4.5,5.5 7.5,11" fill="none" stroke="#555"/><polyline points="11,5.5 7.5,11.5" fill="none" stroke="#fff"/></svg><div class="t" style="left:346px;top:7.84px;font-size:12px;font-weight:700;font-style:normal;color:#7f7f7f;letter-spacing:0.264px;font-family:'Liberation Sans',sans-serif;">cmdtool - /bin/bash</div><svg class="a" style="left:314px;top:0px;" width="11" height="11" viewBox="0 0 11 11"><polygon points="0,0 11,0 11,5 5,5 5,11 0,11" fill="#c8c8c8"/><line x1="0.0" y1="0.5" x2="11.0" y2="0.5" stroke="#ffffff" stroke-width="1"/><line x1="10.5" y1="0.0" x2="10.5" y2="5.0" stroke="#6a6a6a" stroke-width="1"/><line x1="11.0" y1="4.5" x2="5.0" y2="4.5" stroke="#6a6a6a" stroke-width="1"/><line x1="4.5" y1="5.0" x2="4.5" y2="11.0" stroke="#6a6a6a" stroke-width="1"/><line x1="5.0" y1="10.5" x2="0.0" y2="10.5" stroke="#6a6a6a" stroke-width="1"/><line x1="0.5" y1="11.0" x2="0.5" y2="0.0" stroke="#ffffff" stroke-width="1"/></svg><svg class="a" style="left:899px;top:0px;" width="11" height="11" viewBox="0 0 11 11"><polygon points="11,0 0,0 0,5 6,5 6,11 11,11" fill="#c8c8c8"/><line x1="11.0" y1="0.5" x2="0.0" y2="0.5" stroke="#ffffff" stroke-width="1"/><line x1="0.5" y1="0.0" x2="0.5" y2="5.0" stroke="#ffffff" stroke-width="1"/><line x1="0.0" y1="4.5" x2="6.0" y2="4.5" stroke="#6a6a6a" stroke-width="1"/><line x1="6.5" y1="5.0" x2="6.5" y2="11.0" stroke="#ffffff" stroke-width="1"/><line x1="6.0" y1="10.5" x2="11.0" y2="10.5" stroke="#6a6a6a" stroke-width="1"/><line x1="10.5" y1="11.0" x2="10.5" y2="0.0" stroke="#6a6a6a" stroke-width="1"/></svg><svg class="a" style="left:314px;top:332px;" width="11" height="11" viewBox="0 0 11 11"><polygon points="0,11 11,11 11,6 5,6 5,0 0,0" fill="#c8c8c8"/><line x1="0.0" y1="10.5" x2="11.0" y2="10.5" stroke="#6a6a6a" stroke-width="1"/><line x1="10.5" y1="11.0" x2="10.5" y2="6.0" stroke="#6a6a6a" stroke-width="1"/><line x1="11.0" y1="6.5" x2="5.0" y2="6.5" stroke="#ffffff" stroke-width="1"/><line x1="4.5" y1="6.0" x2="4.5" y2="0.0" stroke="#6a6a6a" stroke-width="1"/><line x1="5.0" y1="0.5" x2="0.0" y2="0.5" stroke="#ffffff" stroke-width="1"/><line x1="0.5" y1="0.0" x2="0.5" y2="11.0" stroke="#ffffff" stroke-width="1"/></svg><svg class="a" style="left:899px;top:332px;" width="11" height="11" viewBox="0 0 11 11"><polygon points="11,11 0,11 0,6 6,6 6,0 11,0" fill="#c8c8c8"/><line x1="11.0" y1="10.5" x2="0.0" y2="10.5" stroke="#6a6a6a" stroke-width="1"/><line x1="0.5" y1="11.0" x2="0.5" y2="6.0" stroke="#ffffff" stroke-width="1"/><line x1="0.0" y1="6.5" x2="6.0" y2="6.5" stroke="#ffffff" stroke-width="1"/><line x1="6.5" y1="6.0" x2="6.5" y2="0.0" stroke="#ffffff" stroke-width="1"/><line x1="6.0" y1="0.5" x2="11.0" y2="0.5" stroke="#ffffff" stroke-width="1"/><line x1="10.5" y1="0.0" x2="10.5" y2="11.0" stroke="#6a6a6a" stroke-width="1"/></svg><div class="a" style="left:320px;top:26px;width:565px;height:311px;box-sizing:border-box;border:1px solid #000;background:#fff"></div><div class="t" style="left:328px;top:28.5px;font-family:'Liberation Mono',monospace;font-size:12px;letter-spacing:-0.165px;color:#000">bash$</div><div class="t" style="left:328px;top:41.5px;font-family:'Liberation Mono',monospace;font-size:12px;letter-spacing:-0.165px;color:#000">xload&amp;</div><div class="t" style="left:328px;top:54.5px;font-family:'Liberation Mono',monospace;font-size:12px;letter-spacing:-0.165px;color:#000">xload&amp;</div><div class="t" style="left:328px;top:67.5px;font-family:'Liberation Mono',monospace;font-size:12px;letter-spacing:-0.165px;color:#000">[1] 619</div><div class="t" style="left:328px;top:80.5px;font-family:'Liberation Mono',monospace;font-size:12px;letter-spacing:-0.165px;color:#000">bash$ X connection to :0.0 broken (explicit kill or server shutdown).</div><div class="t" style="left:328px;top:93.5px;font-family:'Liberation Mono',monospace;font-size:12px;letter-spacing:-0.165px;color:#000">bash$</div><svg class="a" style="left:871px;top:101px;" width="8" height="8" viewBox="0 0 8 8"><polygon points="4,0.5 7.5,4 4,7.5 0.5,4" fill="#444" stroke="#000" stroke-width="1"/><rect x="3.3" y="3.3" width="1.4" height="1.4" fill="#ccc"/></svg><div class="a" style="left:887px;top:26px;width:14px;height:6px;box-sizing:border-box;border-top:1px solid #fff;border-left:1px solid #fff;border-bottom:1px solid #7a7a7a;border-right:1px solid #7a7a7a;background:#c4c4c4;"></div><div class="a" style="left:887px;top:33px;width:14px;height:48px;box-sizing:border-box;border:1px dotted #fff;border-right:1px dotted #555;border-bottom:1px dotted #555;"></div><div class="a" style="left:888px;top:49px;width:12px;height:1px;border-top:1px dotted #fff"></div><div class="a" style="left:888px;top:64px;width:12px;height:1px;border-top:1px dotted #555"></div><svg class="a" style="left:889px;top:38px;" width="10" height="6" viewBox="0 0 10 6"><defs><pattern id="ck2" width="2" height="2" patternUnits="userSpaceOnUse"><rect width="1" height="1" fill="#444"/><rect x="1" y="1" width="1" height="1" fill="#444"/></pattern></defs><polygon points="5,0 10,6 0,6" fill="url(#ck2)"/></svg><svg class="a" style="left:889px;top:69px;" width="10" height="6" viewBox="0 0 10 6"><polygon points="5,6 10,0 0,0" fill="url(#ck2)"/></svg><div class="a" style="left:893px;top:81px;width:3px;height:258px;background:#6a6a6a"></div><div class="a" style="left:731px;top:180px;width:467px;height:408px;box-sizing:border-box;border:2px solid #000;background:#c4c4c4"></div><svg class="a" style="left:738px;top:186px;" width="15" height="15" viewBox="0 0 15 15"><rect x="0" y="0" width="15" height="15" fill="#c4c4c4" fill-opacity="0"/><polyline points="0.5,15 0.5,0.5 15,0.5" fill="none" stroke="#fff"/><polyline points="14.5,0 14.5,14.5 0,14.5" fill="none" stroke="#6e6e6e"/><polyline points="4,5.5 11.5,5.5" fill="none" stroke="#555"/><polyline points="4.5,5.5 7.5,11" fill="none" stroke="#555"/><polyline points="11,5.5 7.5,11.5" fill="none" stroke="#fff"/></svg><div class="t" style="left:767px;top:186.84px;font-size:12px;font-weight:700;font-style:normal;color:#7f7f7f;letter-spacing:0.462px;font-family:'Liberation Sans',sans-serif;">Text Editor - (NONE), dir; /home/tomas</div><div class="a" style="left:737px;top:205px;width:455px;height:377px;background:#cecece"></div><div class="a" style="left:737px;top:205px;width:455px;height:1px;background:#7a7a7a"></div><div class="a" style="left:737px;top:206px;width:455px;height:1px;background:#fff"></div><svg class="a" style="left:731px;top:180px;" width="11" height="11" viewBox="0 0 11 11"><polygon points="0,0 11,0 11,5 5,5 5,11 0,11" fill="#c8c8c8"/><line x1="0.0" y1="0.5" x2="11.0" y2="0.5" stroke="#ffffff" stroke-width="1"/><line x1="10.5" y1="0.0" x2="10.5" y2="5.0" stroke="#6a6a6a" stroke-width="1"/><line x1="11.0" y1="4.5" x2="5.0" y2="4.5" stroke="#6a6a6a" stroke-width="1"/><line x1="4.5" y1="5.0" x2="4.5" y2="11.0" stroke="#6a6a6a" stroke-width="1"/><line x1="5.0" y1="10.5" x2="0.0" y2="10.5" stroke="#6a6a6a" stroke-width="1"/><line x1="0.5" y1="11.0" x2="0.5" y2="0.0" stroke="#ffffff" stroke-width="1"/></svg><svg class="a" style="left:1187px;top:180px;" width="11" height="11" viewBox="0 0 11 11"><polygon points="11,0 0,0 0,5 6,5 6,11 11,11" fill="#c8c8c8"/><line x1="11.0" y1="0.5" x2="0.0" y2="0.5" stroke="#ffffff" stroke-width="1"/><line x1="0.5" y1="0.0" x2="0.5" y2="5.0" stroke="#ffffff" stroke-width="1"/><line x1="0.0" y1="4.5" x2="6.0" y2="4.5" stroke="#6a6a6a" stroke-width="1"/><line x1="6.5" y1="5.0" x2="6.5" y2="11.0" stroke="#ffffff" stroke-width="1"/><line x1="6.0" y1="10.5" x2="11.0" y2="10.5" stroke="#6a6a6a" stroke-width="1"/><line x1="10.5" y1="11.0" x2="10.5" y2="0.0" stroke="#6a6a6a" stroke-width="1"/></svg><svg class="a" style="left:731px;top:577px;" width="11" height="11" viewBox="0 0 11 11"><polygon points="0,11 11,11 11,6 5,6 5,0 0,0" fill="#c8c8c8"/><line x1="0.0" y1="10.5" x2="11.0" y2="10.5" stroke="#6a6a6a" stroke-width="1"/><line x1="10.5" y1="11.0" x2="10.5" y2="6.0" stroke="#6a6a6a" stroke-width="1"/><line x1="11.0" y1="6.5" x2="5.0" y2="6.5" stroke="#ffffff" stroke-width="1"/><line x1="4.5" y1="6.0" x2="4.5" y2="0.0" stroke="#6a6a6a" stroke-width="1"/><line x1="5.0" y1="0.5" x2="0.0" y2="0.5" stroke="#ffffff" stroke-width="1"/><line x1="0.5" y1="0.0" x2="0.5" y2="11.0" stroke="#ffffff" stroke-width="1"/></svg><svg class="a" style="left:1187px;top:577px;" width="11" height="11" viewBox="0 0 11 11"><polygon points="11,11 0,11 0,6 6,6 6,0 11,0" fill="#c8c8c8"/><line x1="11.0" y1="10.5" x2="0.0" y2="10.5" stroke="#6a6a6a" stroke-width="1"/><line x1="0.5" y1="11.0" x2="0.5" y2="6.0" stroke="#ffffff" stroke-width="1"/><line x1="0.0" y1="6.5" x2="6.0" y2="6.5" stroke="#ffffff" stroke-width="1"/><line x1="6.5" y1="6.0" x2="6.5" y2="0.0" stroke="#ffffff" stroke-width="1"/><line x1="6.0" y1="0.5" x2="11.0" y2="0.5" stroke="#ffffff" stroke-width="1"/><line x1="10.5" y1="0.0" x2="10.5" y2="11.0" stroke="#6a6a6a" stroke-width="1"/></svg><svg class="a" style="left:740px;top:209px;" width="53" height="19" viewBox="0 0 53 19"><path d="M9.5,18.5 H43.5 A9.0,9.0 0 0 0 43.5,0.5" fill="none" stroke="#7a7a7a"/><path d="M43.5,0.5 H9.5 A9.0,9.0 0 0 0 9.5,18.5" fill="none" stroke="#fff"/></svg><div class="t" style="left:751px;top:211.64px;font-size:12px;font-weight:400;font-style:normal;color:#000;letter-spacing:0.066px;font-family:'Liberation Sans',sans-serif;">File</div><svg class="a" style="left:778px;top:215px;" width="8" height="6" viewBox="0 0 8 6"><polyline points="0.5,0.5 7.5,0.5" fill="none" stroke="#555"/><polyline points="0.8,0.8 4,5.5" fill="none" stroke="#555"/><polyline points="7.2,0.8 4,5.5" fill="none" stroke="#fff"/></svg><svg class="a" style="left:803px;top:209px;" width="61" height="19" viewBox="0 0 61 19"><path d="M9.5,18.5 H51.5 A9.0,9.0 0 0 0 51.5,0.5" fill="none" stroke="#7a7a7a"/><path d="M51.5,0.5 H9.5 A9.0,9.0 0 0 0 9.5,18.5" fill="none" stroke="#fff"/></svg><div class="t" style="left:812.7px;top:211.64px;font-size:12px;font-weight:400;font-style:normal;color:#000;letter-spacing:0.552px;font-family:'Liberation Sans',sans-serif;">View</div><svg class="a" style="left:849px;top:215px;" width="8" height="6" viewBox="0 0 8 6"><polyline points="0.5,0.5 7.5,0.5" fill="none" stroke="#555"/><polyline points="0.8,0.8 4,5.5" fill="none" stroke="#555"/><polyline points="7.2,0.8 4,5.5" fill="none" stroke="#fff"/></svg><svg class="a" style="left:874px;top:209px;" width="55" height="19" viewBox="0 0 55 19"><path d="M9.5,18.5 H45.5 A9.0,9.0 0 0 0 45.5,0.5" fill="none" stroke="#7a7a7a"/><path d="M45.5,0.5 H9.5 A9.0,9.0 0 0 0 9.5,18.5" fill="none" stroke="#fff"/></svg><div class="t" style="left:883px;top:211.64px;font-size:12px;font-weight:400;font-style:normal;color:#000;letter-spacing:0.831px;font-family:'Liberation Sans',sans-serif;">Edit</div><svg class="a" style="left:914px;top:215px;" width="8" height="6" viewBox="0 0 8 6"><polyline points="0.5,0.5 7.5,0.5" fill="none" stroke="#555"/><polyline points="0.8,0.8 4,5.5" fill="none" stroke="#555"/><polyline points="7.2,0.8 4,5.5" fill="none" stroke="#fff"/></svg><svg class="a" style="left:939px;top:209px;" width="58" height="19" viewBox="0 0 58 19"><path d="M9.5,18.5 H48.5 A9.0,9.0 0 0 0 48.5,0.5" fill="none" stroke="#7a7a7a"/><path d="M48.5,0.5 H9.5 A9.0,9.0 0 0 0 9.5,18.5" fill="none" stroke="#fff"/></svg><div class="t" style="left:949.4px;top:211.64px;font-size:12px;font-weight:400;font-style:normal;color:#000;letter-spacing:0.415px;font-family:'Liberation Sans',sans-serif;">Find</div><svg class="a" style="left:982px;top:215px;" width="8" height="6" viewBox="0 0 8 6"><polyline points="0.5,0.5 7.5,0.5" fill="none" stroke="#555"/><polyline points="0.8,0.8 4,5.5" fill="none" stroke="#555"/><polyline points="7.2,0.8 4,5.5" fill="none" stroke="#fff"/></svg><div class="a" style="left:736px;top:241px;width:437px;height:341px;box-sizing:border-box;border:1px solid #000;background:#fff"></div><svg class="a" style="left:740px;top:251px;" width="8" height="8" viewBox="0 0 8 8"><polygon points="4,0.5 7.5,4 4,7.5 0.5,4" fill="#444" stroke="#000" stroke-width="1"/><rect x="3.3" y="3.3" width="1.4" height="1.4" fill="#ccc"/></svg><div class="a" style="left:1175px;top:241px;width:14px;height:6px;box-sizing:border-box;border-top:1px solid #fff;border-left:1px solid #fff;border-bottom:1px solid #7a7a7a;border-right:1px solid #7a7a7a;background:#c4c4c4;"></div><div class="a" style="left:1175px;top:249px;width:14px;height:46px;box-sizing:border-box;border-top:1px solid #fff;border-left:1px solid #fff;border-bottom:1px solid #7a7a7a;border-right:1px solid #7a7a7a;background:#c4c4c4;"></div><div class="a" style="left:1176px;top:264px;width:12px;height:1px;background:#fff"></div><div class="a" style="left:1176px;top:278px;width:12px;height:1px;background:#6a6a6a"></div><svg class="a" style="left:1177px;top:253px;" width="10" height="6" viewBox="0 0 10 6"><polygon points="5,0 9,5 1,5" fill="#666"/></svg><svg class="a" style="left:1177px;top:284px;" width="10" height="6" viewBox="0 0 10 6"><polygon points="1,0 9,0 5,5" fill="#666"/></svg><div class="a" style="left:1181px;top:296px;width:3px;height:278px;background:#6a6a6a"></div><div class="a" style="left:1175px;top:576px;width:14px;height:6px;box-sizing:border-box;border-top:1px solid #fff;border-left:1px solid #fff;border-bottom:1px solid #7a7a7a;border-right:1px solid #7a7a7a;background:#c4c4c4;"></div><div class="a" style="left:1092px;top:0px;width:187px;height:179px;background:#c4c4c4"></div><div class="a" style="left:1092px;top:0px;width:2px;height:179px;background:#f4f8f8"></div><div class="a" style="left:1092px;top:1px;width:187px;height:1px;background:#f4f4f4"></div><div class="a" style="left:1092px;top:0px;width:187px;height:1px;background:#dcdcdc"></div><div class="a" style="left:1277px;top:0px;width:2px;height:179px;background:#000"></div><div class="a" style="left:1092px;top:177px;width:187px;height:2px;background:#000"></div><div class="a" style="left:1096px;top:4px;width:178px;height:170px;box-sizing:border-box;border-top:1px solid #4a4a4a;border-left:1px solid #4a4a4a;border-right:1px solid #333;border-bottom:1px solid #333;background:#c3c3c3"></div><div class="a" style="left:1184px;top:4px;width:2px;height:85px;background:#fff"></div><div class="a" style="left:1096px;top:88px;width:88px;height:2px;background:#fff"></div><div class="a" style="left:1186px;top:4px;width:87px;height:1px;background:#fff"></div><div class="a" style="left:1097px;top:90px;width:1px;height:83px;background:#fff"></div><div class="a" style="left:1184px;top:88px;width:89px;height:1px;background:#3a3a3a"></div><div class="a" style="left:1184px;top:88px;width:1px;height:85px;background:#3a3a3a"></div><div class="a" style="left:1185px;top:89px;width:88px;height:1px;background:#fff"></div><div class="a" style="left:1185px;top:89px;width:1px;height:84px;background:#fff"></div><div class="a" style="left:1102px;top:7px;width:15px;height:20px;box-sizing:border-box;border:1px solid #7a7a7a;background:#c3c3c3;overflow:hidden"></div><div class="a" style="left:1103px;top:8px;width:13px;height:18px;overflow:hidden"><div class="t" style="left:0.7000000000000455px;top:5.6px;font-family:'Liberation Mono',monospace;font-style:italic;font-size:10px;letter-spacing:0px;color:#7a7a7a">Wo</div></div><div class="a" style="left:1118px;top:5px;width:40px;height:27px;box-sizing:border-box;border:1px solid #7a7a7a;background:#c3c3c3;overflow:hidden"></div><div class="a" style="left:1119px;top:6px;width:38px;height:25px;overflow:hidden"><div class="t" style="left:0.5px;top:8.5px;font-family:'Liberation Mono',monospace;font-style:italic;font-size:10px;letter-spacing:0px;color:#7a7a7a">cmdtool</div></div><div class="a" style="left:1146px;top:19px;width:31px;height:33px;box-sizing:border-box;border:1px solid #7a7a7a;background:#c3c3c3;overflow:hidden"></div><div class="a" style="left:1147px;top:20px;width:29px;height:31px;overflow:hidden"><div class="t" style="left:6.7999999999999545px;top:11.0px;font-family:'Liberation Mono',monospace;font-style:italic;font-size:10px;letter-spacing:0px;color:#7a7a7a">Text</div></div><div class="a" style="left:1102px;top:28px;width:15px;height:26px;box-sizing:border-box;border:1px solid #7a7a7a;background:#c3c3c3;overflow:hidden"></div><div class="a" style="left:1103px;top:29px;width:13px;height:24px;overflow:hidden"><div class="t" style="left:0px;top:8.3px;font-family:'Liberation Mono',monospace;font-style:italic;font-size:10px;letter-spacing:0px;color:#7a7a7a">Go</div></div><div class="a" style="left:1110px;top:55px;width:29px;height:29px;box-sizing:border-box;border:1px solid #7a7a7a;background:#c3c3c3;overflow:hidden"></div><div class="a" style="left:1111px;top:56px;width:27px;height:27px;overflow:hidden"><div class="t" style="left:0.599999999999909px;top:9.4px;font-family:'Liberation Mono',monospace;font-style:italic;font-size:10px;letter-spacing:0.3px;color:#7a7a7a">file</div></div><div class="a" style="left:1142px;top:56px;width:38px;height:20px;box-sizing:border-box;border:1px solid #7a7a7a;background:#c3c3c3;overflow:hidden"></div><div class="a" style="left:1143px;top:57px;width:36px;height:18px;overflow:hidden"><div class="t" style="left:0.2999999999999545px;top:5.4px;font-family:'Liberation Mono',monospace;font-style:italic;font-size:10px;letter-spacing:0.3px;color:#7a7a7a">Linux</div></div><div class="a" style="left:1097px;top:68px;width:11px;height:14px;box-sizing:border-box;border:2px solid #000;background:#c8c8c8"></div><div class="t" style="left:1099px;top:70px;font-size:9px;font-family:'Liberation Mono',monospace;color:#000">A</div><div class="a" style="left:1186px;top:5px;width:44px;height:43px;box-sizing:border-box;border:1px solid #7a7a7a;background:#c3c3c3;overflow:hidden"></div><div class="a" style="left:1187px;top:6px;width:42px;height:41px;overflow:hidden"><div class="t" style="left:0px;top:16.4px;font-family:'Liberation Mono',monospace;font-style:italic;font-size:10px;letter-spacing:0.2px;color:#7a7a7a">Mahjong</div></div><div class="a" style="left:1097px;top:90px;width:38px;height:52px;box-sizing:border-box;border:1px solid #7a7a7a;background:#c3c3c3;overflow:hidden"></div><div class="a" style="left:1098px;top:91px;width:36px;height:50px;overflow:hidden"><div class="t" style="left:0.5px;top:21.0px;font-family:'Liberation Mono',monospace;font-style:italic;font-size:10px;letter-spacing:0.2px;color:#7a7a7a">Editor</div></div><div class="a" style="left:1135px;top:104px;width:38px;height:52px;box-sizing:border-box;border:1px solid #7a7a7a;background:#c3c3c3;overflow:hidden"></div><div class="a" style="left:1136px;top:105px;width:36px;height:50px;overflow:hidden"><div class="t" style="left:0.20000000000004547px;top:21.0px;font-family:'Liberation Mono',monospace;font-style:italic;font-size:10px;letter-spacing:0.2px;color:#7a7a7a">Editor</div></div><div class="a" style="left:1186px;top:90px;width:52px;height:47px;box-sizing:border-box;border:1px solid #7a7a7a;background:#c3c3c3;overflow:hidden"></div><div class="a" style="left:1187px;top:91px;width:50px;height:45px;overflow:hidden"><div class="t" style="left:0.599999999999909px;top:18.4px;font-family:'Liberation Mono',monospace;font-style:italic;font-size:10px;letter-spacing:0.2px;color:#7a7a7a">Shisen-Sho</div></div><div class="a" style="left:1273px;top:159px;width:6px;height:20px;background:#c8c8c8"></div><div class="a" style="left:1259px;top:174px;width:20px;height:5px;background:#c8c8c8"></div><div class="a" style="left:1277px;top:160px;width:1px;height:18px;background:#fff"></div><div class="a" style="left:1260px;top:177px;width:18px;height:1px;background:#fff"></div><div class="a" style="left:1275px;top:159px;width:4px;height:1px;background:#fff"></div><div class="a" style="left:1275px;top:160px;width:2px;height:1px;background:#444"></div><div class="a" style="left:1259px;top:175px;width:1px;height:4px;background:#fff"></div><div class="a" style="left:1260px;top:175px;width:1px;height:2px;background:#444"></div><div class="a" style="left:1096px;top:173px;width:178px;height:1px;background:#333"></div><div class="a" style="left:1273px;top:4px;width:1px;height:170px;background:#333"></div><div class="a" style="left:203px;top:621px;width:437px;height:359px;box-sizing:border-box;border:2px solid #000;background:#c4c4c4"></div><svg class="a" style="left:211px;top:628px;" width="15" height="15" viewBox="0 0 15 15"><rect x="0" y="0" width="15" height="15" fill="#c4c4c4" fill-opacity="0"/><polyline points="0.5,15 0.5,0.5 15,0.5" fill="none" stroke="#fff"/><polyline points="14.5,0 14.5,14.5 0,14.5" fill="none" stroke="#6e6e6e"/><polyline points="4,5.5 11.5,5.5" fill="none" stroke="#555"/><polyline points="4.5,5.5 7.5,11" fill="none" stroke="#555"/><polyline points="11,5.5 7.5,11.5" fill="none" stroke="#fff"/></svg><div class="t" style="left:235.3px;top:628.84px;font-size:12px;font-weight:700;font-style:normal;color:#7f7f7f;letter-spacing:0.096px;font-family:'Liberation Sans',sans-serif;">file:/usr/openwin/bin/ &lt;2&gt;</div><svg class="a" style="left:203px;top:621px;" width="11" height="11" viewBox="0 0 11 11"><polygon points="0,0 11,0 11,5 5,5 5,11 0,11" fill="#c8c8c8"/><line x1="0.0" y1="0.5" x2="11.0" y2="0.5" stroke="#ffffff" stroke-width="1"/><line x1="10.5" y1="0.0" x2="10.5" y2="5.0" stroke="#6a6a6a" stroke-width="1"/><line x1="11.0" y1="4.5" x2="5.0" y2="4.5" stroke="#6a6a6a" stroke-width="1"/><line x1="4.5" y1="5.0" x2="4.5" y2="11.0" stroke="#6a6a6a" stroke-width="1"/><line x1="5.0" y1="10.5" x2="0.0" y2="10.5" stroke="#6a6a6a" stroke-width="1"/><line x1="0.5" y1="11.0" x2="0.5" y2="0.0" stroke="#ffffff" stroke-width="1"/></svg><svg class="a" style="left:629px;top:621px;" width="11" height="11" viewBox="0 0 11 11"><polygon points="11,0 0,0 0,5 6,5 6,11 11,11" fill="#c8c8c8"/><line x1="11.0" y1="0.5" x2="0.0" y2="0.5" stroke="#ffffff" stroke-width="1"/><line x1="0.5" y1="0.0" x2="0.5" y2="5.0" stroke="#ffffff" stroke-width="1"/><line x1="0.0" y1="4.5" x2="6.0" y2="4.5" stroke="#6a6a6a" stroke-width="1"/><line x1="6.5" y1="5.0" x2="6.5" y2="11.0" stroke="#ffffff" stroke-width="1"/><line x1="6.0" y1="10.5" x2="11.0" y2="10.5" stroke="#6a6a6a" stroke-width="1"/><line x1="10.5" y1="11.0" x2="10.5" y2="0.0" stroke="#6a6a6a" stroke-width="1"/></svg><svg class="a" style="left:203px;top:969px;" width="11" height="11" viewBox="0 0 11 11"><polygon points="0,11 11,11 11,6 5,6 5,0 0,0" fill="#c8c8c8"/><line x1="0.0" y1="10.5" x2="11.0" y2="10.5" stroke="#6a6a6a" stroke-width="1"/><line x1="10.5" y1="11.0" x2="10.5" y2="6.0" stroke="#6a6a6a" stroke-width="1"/><line x1="11.0" y1="6.5" x2="5.0" y2="6.5" stroke="#ffffff" stroke-width="1"/><line x1="4.5" y1="6.0" x2="4.5" y2="0.0" stroke="#6a6a6a" stroke-width="1"/><line x1="5.0" y1="0.5" x2="0.0" y2="0.5" stroke="#ffffff" stroke-width="1"/><line x1="0.5" y1="0.0" x2="0.5" y2="11.0" stroke="#ffffff" stroke-width="1"/></svg><svg class="a" style="left:629px;top:969px;" width="11" height="11" viewBox="0 0 11 11"><polygon points="11,11 0,11 0,6 6,6 6,0 11,0" fill="#c8c8c8"/><line x1="11.0" y1="10.5" x2="0.0" y2="10.5" stroke="#6a6a6a" stroke-width="1"/><line x1="0.5" y1="11.0" x2="0.5" y2="6.0" stroke="#ffffff" stroke-width="1"/><line x1="0.0" y1="6.5" x2="6.0" y2="6.5" stroke="#ffffff" stroke-width="1"/><line x1="6.5" y1="6.0" x2="6.5" y2="0.0" stroke="#ffffff" stroke-width="1"/><line x1="6.0" y1="0.5" x2="11.0" y2="0.5" stroke="#ffffff" stroke-width="1"/><line x1="10.5" y1="0.0" x2="10.5" y2="11.0" stroke="#6a6a6a" stroke-width="1"/></svg><div class="a" style="left:209px;top:647px;width:425px;height:28px;box-sizing:border-box;border-top:1px solid #fff;border-bottom:1px solid #5a5a5a;background:#c3c3c3"></div><div class="a" style="left:209px;top:647px;width:9px;height:28px;box-sizing:border-box;border-left:1px solid #fff;border-right:1px solid #5a5a5a;"></div><div class="a" style="left:218px;top:648px;width:1px;height:26px;background:#fff"></div><div class="a" style="left:211px;top:651px;width:5px;height:20px;background-image:radial-gradient(circle at 1px 1px,#444 0.9px,transparent 1px);background-size:3px 4px"></div><div class="a" style="left:209px;top:675px;width:425px;height:26px;box-sizing:border-box;border-top:1px solid #fff;border-bottom:1px solid #5a5a5a;background:#c3c3c3"></div><div class="a" style="left:209px;top:675px;width:9px;height:26px;box-sizing:border-box;border-left:1px solid #fff;border-right:1px solid #5a5a5a;"></div><div class="a" style="left:218px;top:676px;width:1px;height:24px;background:#fff"></div><div class="a" style="left:211px;top:679px;width:5px;height:18px;background-image:radial-gradient(circle at 1px 1px,#444 0.9px,transparent 1px);background-size:3px 4px"></div><div class="a" style="left:209px;top:701px;width:425px;height:26px;box-sizing:border-box;border-top:1px solid #fff;border-bottom:1px solid #5a5a5a;background:#c3c3c3"></div><div class="a" style="left:209px;top:701px;width:9px;height:26px;box-sizing:border-box;border-left:1px solid #fff;border-right:1px solid #5a5a5a;"></div><div class="a" style="left:218px;top:702px;width:1px;height:24px;background:#fff"></div><div class="a" style="left:211px;top:705px;width:5px;height:18px;background-image:radial-gradient(circle at 1px 1px,#444 0.9px,transparent 1px);background-size:3px 4px"></div><div class="a" style="left:633px;top:647px;width:1px;height:80px;background:#5a5a5a"></div><div class="t" style="left:233.8px;top:656.11px;font-size:10.5px;font-weight:400;font-style:normal;color:#000;letter-spacing:-0.830px;font-family:'Liberation Sans',sans-serif;">File</div><div class="a" style="left:233.8px;top:666px;width:6px;height:1px;background:#000"></div><div class="t" style="left:270.4px;top:656.11px;font-size:10.5px;font-weight:400;font-style:normal;color:#000;letter-spacing:-0.023px;font-family:'Liberation Sans',sans-serif;">Edit</div><div class="a" style="left:270.4px;top:666px;width:6px;height:1px;background:#000"></div><div class="t" style="left:311px;top:656.11px;font-size:10.5px;font-weight:400;font-style:normal;color:#000;letter-spacing:-0.392px;font-family:'Liberation Sans',sans-serif;">View</div><div class="a" style="left:311px;top:666px;width:6px;height:1px;background:#000"></div><div class="t" style="left:355px;top:656.11px;font-size:10.5px;font-weight:400;font-style:normal;color:#000;letter-spacing:-0.279px;font-family:'Liberation Sans',sans-serif;">Bookmarks</div><div class="a" style="left:355px;top:666px;width:6px;height:1px;background:#000"></div><div class="t" style="left:428.3px;top:656.11px;font-size:10.5px;font-weight:400;font-style:normal;color:#000;letter-spacing:-0.550px;font-family:'Liberation Sans',sans-serif;">Cache</div><div class="a" style="left:428.3px;top:666px;width:6px;height:1px;background:#000"></div><div class="t" style="left:479.3px;top:656.11px;font-size:10.5px;font-weight:400;font-style:normal;color:#000;letter-spacing:-0.069px;font-family:'Liberation Sans',sans-serif;">Options</div><div class="a" style="left:479.3px;top:666px;width:6px;height:1px;background:#000"></div><div class="t" style="left:602.2px;top:656.11px;font-size:10.5px;font-weight:400;font-style:normal;color:#000;letter-spacing:-0.448px;font-family:'Liberation Sans',sans-serif;">Help</div><div class="a" style="left:602.2px;top:666px;width:6px;height:1px;background:#000"></div><div class="a" style="left:225px;top:703px;width:408px;height:22px;box-sizing:border-box;border-top:2px solid #000;border-left:2px solid #000;border-bottom:1px solid #fff;background:#fff"></div><div class="t" style="left:228.8px;top:710.11px;font-size:10.5px;font-weight:400;font-style:normal;color:#000;letter-spacing:0.004px;font-family:'Liberation Sans',sans-serif;">file:/usr/openwin/bin/textedit</div><svg class="a" style="left:232px;top:681px;" width="13" height="16" viewBox="0 0 13 16"><polygon points="6.5,1 12,7 9,7 9,14 4,14 4,7 1,7" fill="#fff" stroke="#000" stroke-width="1.3"/></svg><svg class="a" style="left:261px;top:682px;" width="14" height="13" viewBox="0 0 14 13"><polygon points="1,6.5 7,1 7,4 13,4 13,9 7,9 7,12" fill="#fff" stroke="#000" stroke-width="1.3"/></svg><svg class="a" style="left:290px;top:682px;" width="14" height="14" viewBox="0 0 14 14"><polygon points="13,6.5 7,1 7,4 1,4 1,9 7,9 7,12" fill="#a8a8a8" stroke="#a8a8a8" stroke-width="1"/><path d="M6,13 L12,7" stroke="#fff" stroke-width="1.2"/></svg><svg class="a" style="left:317px;top:680px;" width="16" height="16" viewBox="0 0 16 16"><polygon points="8,1 15,8 13,8 13,15 3,15 3,8 1,8" fill="#fff" stroke="#000" stroke-width="1.3"/><rect x="6.5" y="10" width="3" height="5" fill="#000"/></svg><svg class="a" style="left:355px;top:680px;" width="16" height="16" viewBox="0 0 16 16"><path d="M3,8 A5,5 0 0 1 12,5" fill="none" stroke="#000" stroke-width="2.2"/><polygon points="10,2 15,5 10,8" fill="#000"/><path d="M13,8 A5,5 0 0 1 4,11" fill="none" stroke="#000" stroke-width="2.2"/><polygon points="6,14 1,11 6,8" fill="#000"/></svg><svg class="a" style="left:394px;top:682px;" width="15" height="14" viewBox="0 0 15 14"><rect x="1" y="1" width="7" height="9" fill="#fff" stroke="#000"/><rect x="6" y="5" width="8" height="8" fill="#fff" stroke="#000"/><path d="M8,8 H12 M8,10 H12" stroke="#000"/></svg><svg class="a" style="left:423px;top:681px;" width="16" height="16" viewBox="0 0 16 16"><rect x="1" y="3" width="10" height="11" fill="#fff" stroke="#000"/><rect x="4" y="1" width="4" height="3" fill="#fff" stroke="#000"/><rect x="8" y="8" width="7" height="7" fill="#fff" stroke="#000"/><path d="M10,11 H13" stroke="#000"/></svg><div class="t" style="left:462.5px;top:681.11px;font-size:17px;font-weight:700;font-style:normal;color:#141450;letter-spacing:0.000px;font-family:'Liberation Sans',sans-serif;">?</div><svg class="a" style="left:502px;top:681px;" width="12" height="16" viewBox="0 0 12 16"><rect x="2" y="1" width="8" height="14" rx="2" fill="#a4a4a4"/><path d="M10,2 Q8,8 10,14" stroke="#fff" fill="none"/></svg><svg class="a" style="left:607px;top:679px;" width="22" height="20" viewBox="0 0 22 20"><g transform="translate(11,10)"><circle cx="6.74" cy="2.79" r="2.9" fill="#fff" stroke="#222" stroke-width="1.3"/><circle cx="2.79" cy="6.74" r="2.9" fill="#fff" stroke="#222" stroke-width="1.3"/><circle cx="-2.79" cy="6.74" r="2.9" fill="#fff" stroke="#222" stroke-width="1.3"/><circle cx="-6.74" cy="2.79" r="2.9" fill="#fff" stroke="#222" stroke-width="1.3"/><circle cx="-6.74" cy="-2.79" r="2.9" fill="#fff" stroke="#222" stroke-width="1.3"/><circle cx="-2.79" cy="-6.74" r="2.9" fill="#fff" stroke="#222" stroke-width="1.3"/><circle cx="2.79" cy="-6.74" r="2.9" fill="#fff" stroke="#222" stroke-width="1.3"/><circle cx="6.74" cy="-2.79" r="2.9" fill="#fff" stroke="#222" stroke-width="1.3"/><circle r="6.6" fill="#f4f4f4"/><circle r="2.4" fill="#333"/><path d="M-5,3 Q0,7 5,3" stroke="#999" fill="none" stroke-width="1.2"/></g></svg><div class="a" style="left:212px;top:727px;width:422px;height:231px;box-sizing:border-box;border-left:1px solid #5a5a5a;background:#c3c3c3"></div><div class="a" style="left:634px;top:647px;width:1px;height:327px;background:#fff"></div><div class="a" style="left:618px;top:727px;width:15px;height:231px;background:#b8b8b8"></div><div class="a" style="left:620px;top:770px;width:12px;height:172px;box-sizing:border-box;border-left:2px solid #fff;border-right:2px solid #5a5a5a;border-bottom:2px solid #5a5a5a;background:#c3c3c3"></div><svg class="a" style="left:619px;top:728px;" width="14" height="15" viewBox="0 0 14 15"><polygon points="7,1 13,14 1,14" fill="#c3c3c3" stroke="#fff" stroke-width="1.5"/><path d="M7,1 L13,14" stroke="#5a5a5a" stroke-width="1"/></svg><svg class="a" style="left:619px;top:942px;" width="14" height="15" viewBox="0 0 14 15"><polygon points="1,1 13,1 7,14" fill="#c3c3c3" stroke="#fff" stroke-width="1.5"/><path d="M13,1 L7,14" stroke="#5a5a5a" stroke-width="1.5"/></svg><div class="a" style="left:212px;top:958px;width:422px;height:1px;background:#5a5a5a"></div><div class="a" style="left:209px;top:973px;width:426px;height:1px;background:#fff"></div><div class="a" style="left:209px;top:959px;width:425px;height:14px;background:#c3c3c3"></div><svg class="a" style="left:226px;top:727.75px;" width="16" height="15" viewBox="0 0 16 15"><g transform="translate(8,7.5)"><circle cx="4.80" cy="1.99" r="2.7" fill="#fff" stroke="#000" stroke-width="1.4"/><circle cx="1.99" cy="4.80" r="2.7" fill="#fff" stroke="#000" stroke-width="1.4"/><circle cx="-1.99" cy="4.80" r="2.7" fill="#fff" stroke="#000" stroke-width="1.4"/><circle cx="-4.80" cy="1.99" r="2.7" fill="#fff" stroke="#000" stroke-width="1.4"/><circle cx="-4.80" cy="-1.99" r="2.7" fill="#fff" stroke="#000" stroke-width="1.4"/><circle cx="-1.99" cy="-4.80" r="2.7" fill="#fff" stroke="#000" stroke-width="1.4"/><circle cx="1.99" cy="-4.80" r="2.7" fill="#fff" stroke="#000" stroke-width="1.4"/><circle cx="4.80" cy="-1.99" r="2.7" fill="#fff" stroke="#000" stroke-width="1.4"/><circle r="4.6" fill="#fff"/><line x1="2.20" y1="0.00" x2="5.00" y2="0.00" stroke="#000" stroke-width="0.9"/><line x1="1.56" y1="1.56" x2="3.54" y2="3.54" stroke="#000" stroke-width="0.9"/><line x1="0.00" y1="2.20" x2="0.00" y2="5.00" stroke="#000" stroke-width="0.9"/><line x1="-1.56" y1="1.56" x2="-3.54" y2="3.54" stroke="#000" stroke-width="0.9"/><line x1="-2.20" y1="0.00" x2="-5.00" y2="0.00" stroke="#000" stroke-width="0.9"/><line x1="-1.56" y1="-1.56" x2="-3.54" y2="-3.54" stroke="#000" stroke-width="0.9"/><line x1="-0.00" y1="-2.20" x2="-0.00" y2="-5.00" stroke="#000" stroke-width="0.9"/><line x1="1.56" y1="-1.56" x2="3.54" y2="-3.54" stroke="#000" stroke-width="0.9"/><circle r="1.4" fill="#000"/><path d="M-1.5,4 V7 M1.5,4 V7" stroke="#999" stroke-width="1"/></g></svg><div class="t" style="left:246.5px;top:728.59px;font-size:12px;font-weight:400;font-style:normal;color:#000;letter-spacing:0.184px;font-family:'Liberation Sans',sans-serif;">cmdtool</div><div class="a" style="left:246.5px;top:739.75px;width:44.3px;height:1.3px;background:#000"></div><svg class="a" style="left:226px;top:752.75px;" width="16" height="15" viewBox="0 0 16 15"><g transform="translate(8,7.5)"><circle cx="4.80" cy="1.99" r="2.7" fill="#fff" stroke="#000" stroke-width="1.4"/><circle cx="1.99" cy="4.80" r="2.7" fill="#fff" stroke="#000" stroke-width="1.4"/><circle cx="-1.99" cy="4.80" r="2.7" fill="#fff" stroke="#000" stroke-width="1.4"/><circle cx="-4.80" cy="1.99" r="2.7" fill="#fff" stroke="#000" stroke-width="1.4"/><circle cx="-4.80" cy="-1.99" r="2.7" fill="#fff" stroke="#000" stroke-width="1.4"/><circle cx="-1.99" cy="-4.80" r="2.7" fill="#fff" stroke="#000" stroke-width="1.4"/><circle cx="1.99" cy="-4.80" r="2.7" fill="#fff" stroke="#000" stroke-width="1.4"/><circle cx="4.80" cy="-1.99" r="2.7" fill="#fff" stroke="#000" stroke-width="1.4"/><circle r="4.6" fill="#fff"/><line x1="2.20" y1="0.00" x2="5.00" y2="0.00" stroke="#000" stroke-width="0.9"/><line x1="1.56" y1="1.56" x2="3.54" y2="3.54" stroke="#000" stroke-width="0.9"/><line x1="0.00" y1="2.20" x2="0.00" y2="5.00" stroke="#000" stroke-width="0.9"/><line x1="-1.56" y1="1.56" x2="-3.54" y2="3.54" stroke="#000" stroke-width="0.9"/><line x1="-2.20" y1="0.00" x2="-5.00" y2="0.00" stroke="#000" stroke-width="0.9"/><line x1="-1.56" y1="-1.56" x2="-3.54" y2="-3.54" stroke="#000" stroke-width="0.9"/><line x1="-0.00" y1="-2.20" x2="-0.00" y2="-5.00" stroke="#000" stroke-width="0.9"/><line x1="1.56" y1="-1.56" x2="3.54" y2="-3.54" stroke="#000" stroke-width="0.9"/><circle r="1.4" fill="#000"/><path d="M-1.5,4 V7 M1.5,4 V7" stroke="#999" stroke-width="1"/></g></svg><div class="t" style="left:246.5px;top:753.59px;font-size:12px;font-weight:400;font-style:normal;color:#000;letter-spacing:-0.305px;font-family:'Liberation Sans',sans-serif;">msgfmt</div><div class="a" style="left:246.5px;top:764.75px;width:38.5px;height:1.3px;background:#000"></div><svg class="a" style="left:226px;top:777.75px;" width="16" height="15" viewBox="0 0 16 15"><g transform="translate(8,7.5)"><circle cx="4.80" cy="1.99" r="2.7" fill="#fff" stroke="#000" stroke-width="1.4"/><circle cx="1.99" cy="4.80" r="2.7" fill="#fff" stroke="#000" stroke-width="1.4"/><circle cx="-1.99" cy="4.80" r="2.7" fill="#fff" stroke="#000" stroke-width="1.4"/><circle cx="-4.80" cy="1.99" r="2.7" fill="#fff" stroke="#000" stroke-width="1.4"/><circle cx="-4.80" cy="-1.99" r="2.7" fill="#fff" stroke="#000" stroke-width="1.4"/><circle cx="-1.99" cy="-4.80" r="2.7" fill="#fff" stroke="#000" stroke-width="1.4"/><circle cx="1.99" cy="-4.80" r="2.7" fill="#fff" stroke="#000" stroke-width="1.4"/><circle cx="4.80" cy="-1.99" r="2.7" fill="#fff" stroke="#000" stroke-width="1.4"/><circle r="4.6" fill="#fff"/><line x1="2.20" y1="0.00" x2="5.00" y2="0.00" stroke="#000" stroke-width="0.9"/><line x1="1.56" y1="1.56" x2="3.54" y2="3.54" stroke="#000" stroke-width="0.9"/><line x1="0.00" y1="2.20" x2="0.00" y2="5.00" stroke="#000" stroke-width="0.9"/><line x1="-1.56" y1="1.56" x2="-3.54" y2="3.54" stroke="#000" stroke-width="0.9"/><line x1="-2.20" y1="0.00" x2="-5.00" y2="0.00" stroke="#000" stroke-width="0.9"/><line x1="-1.56" y1="-1.56" x2="-3.54" y2="-3.54" stroke="#000" stroke-width="0.9"/><line x1="-0.00" y1="-2.20" x2="-0.00" y2="-5.00" stroke="#000" stroke-width="0.9"/><line x1="1.56" y1="-1.56" x2="3.54" y2="-3.54" stroke="#000" stroke-width="0.9"/><circle r="1.4" fill="#000"/><path d="M-1.5,4 V7 M1.5,4 V7" stroke="#999" stroke-width="1"/></g></svg><div class="t" style="left:246.5px;top:778.59px;font-size:12px;font-weight:400;font-style:normal;color:#000;letter-spacing:-0.150px;font-family:'Liberation Sans',sans-serif;">olwm</div><div class="a" style="left:246.5px;top:789.75px;width:28.4px;height:1.3px;background:#000"></div><svg class="a" style="left:226px;top:802.75px;" width="16" height="17" viewBox="0 0 16 17"><rect x="1.5" y="1.5" width="12" height="10" fill="#fff" stroke="#000" stroke-width="1.5"/><rect x="4" y="4" width="7" height="4" fill="#000"/><path d="M4,12 V14 Q4,16 6,15.5" fill="none" stroke="#000" stroke-width="1.2"/></svg><div class="t" style="left:246.5px;top:803.59px;font-size:12px;font-weight:400;font-style:normal;color:#000;letter-spacing:0.215px;font-family:'Liberation Sans',sans-serif;">openwin</div><div class="a" style="left:246.5px;top:814.75px;width:47.2px;height:1.3px;background:#000"></div><svg class="a" style="left:226px;top:827.75px;" width="16" height="15" viewBox="0 0 16 15"><g transform="translate(8,7.5)"><circle cx="4.80" cy="1.99" r="2.7" fill="#fff" stroke="#000" stroke-width="1.4"/><circle cx="1.99" cy="4.80" r="2.7" fill="#fff" stroke="#000" stroke-width="1.4"/><circle cx="-1.99" cy="4.80" r="2.7" fill="#fff" stroke="#000" stroke-width="1.4"/><circle cx="-4.80" cy="1.99" r="2.7" fill="#fff" stroke="#000" stroke-width="1.4"/><circle cx="-4.80" cy="-1.99" r="2.7" fill="#fff" stroke="#000" stroke-width="1.4"/><circle cx="-1.99" cy="-4.80" r="2.7" fill="#fff" stroke="#000" stroke-width="1.4"/><circle cx="1.99" cy="-4.80" r="2.7" fill="#fff" stroke="#000" stroke-width="1.4"/><circle cx="4.80" cy="-1.99" r="2.7" fill="#fff" stroke="#000" stroke-width="1.4"/><circle r="4.6" fill="#fff"/><line x1="2.20" y1="0.00" x2="5.00" y2="0.00" stroke="#000" stroke-width="0.9"/><line x1="1.56" y1="1.56" x2="3.54" y2="3.54" stroke="#000" stroke-width="0.9"/><line x1="0.00" y1="2.20" x2="0.00" y2="5.00" stroke="#000" stroke-width="0.9"/><line x1="-1.56" y1="1.56" x2="-3.54" y2="3.54" stroke="#000" stroke-width="0.9"/><line x1="-2.20" y1="0.00" x2="-5.00" y2="0.00" stroke="#000" stroke-width="0.9"/><line x1="-1.56" y1="-1.56" x2="-3.54" y2="-3.54" stroke="#000" stroke-width="0.9"/><line x1="-0.00" y1="-2.20" x2="-0.00" y2="-5.00" stroke="#000" stroke-width="0.9"/><line x1="1.56" y1="-1.56" x2="3.54" y2="-3.54" stroke="#000" stroke-width="0.9"/><circle r="1.4" fill="#000"/><path d="M-1.5,4 V7 M1.5,4 V7" stroke="#999" stroke-width="1"/></g></svg><div class="t" style="left:246.5px;top:828.59px;font-size:12px;font-weight:400;font-style:normal;color:#000;letter-spacing:0.057px;font-family:'Liberation Sans',sans-serif;">props</div><div class="a" style="left:246.5px;top:839.75px;width:31.3px;height:1.3px;background:#000"></div><svg class="a" style="left:226px;top:852.75px;" width="16" height="15" viewBox="0 0 16 15"><g transform="translate(8,7.5)"><circle cx="4.80" cy="1.99" r="2.7" fill="#fff" stroke="#000" stroke-width="1.4"/><circle cx="1.99" cy="4.80" r="2.7" fill="#fff" stroke="#000" stroke-width="1.4"/><circle cx="-1.99" cy="4.80" r="2.7" fill="#fff" stroke="#000" stroke-width="1.4"/><circle cx="-4.80" cy="1.99" r="2.7" fill="#fff" stroke="#000" stroke-width="1.4"/><circle cx="-4.80" cy="-1.99" r="2.7" fill="#fff" stroke="#000" stroke-width="1.4"/><circle cx="-1.99" cy="-4.80" r="2.7" fill="#fff" stroke="#000" stroke-width="1.4"/><circle cx="1.99" cy="-4.80" r="2.7" fill="#fff" stroke="#000" stroke-width="1.4"/><circle cx="4.80" cy="-1.99" r="2.7" fill="#fff" stroke="#000" stroke-width="1.4"/><circle r="4.6" fill="#fff"/><line x1="2.20" y1="0.00" x2="5.00" y2="0.00" stroke="#000" stroke-width="0.9"/><line x1="1.56" y1="1.56" x2="3.54" y2="3.54" stroke="#000" stroke-width="0.9"/><line x1="0.00" y1="2.20" x2="0.00" y2="5.00" stroke="#000" stroke-width="0.9"/><line x1="-1.56" y1="1.56" x2="-3.54" y2="3.54" stroke="#000" stroke-width="0.9"/><line x1="-2.20" y1="0.00" x2="-5.00" y2="0.00" stroke="#000" stroke-width="0.9"/><line x1="-1.56" y1="-1.56" x2="-3.54" y2="-3.54" stroke="#000" stroke-width="0.9"/><line x1="-0.00" y1="-2.20" x2="-0.00" y2="-5.00" stroke="#000" stroke-width="0.9"/><line x1="1.56" y1="-1.56" x2="3.54" y2="-3.54" stroke="#000" stroke-width="0.9"/><circle r="1.4" fill="#000"/><path d="M-1.5,4 V7 M1.5,4 V7" stroke="#999" stroke-width="1"/></g></svg><div class="t" style="left:246.5px;top:853.59px;font-size:12px;font-weight:400;font-style:normal;color:#000;letter-spacing:0.371px;font-family:'Liberation Sans',sans-serif;">svenv</div><div class="a" style="left:246.5px;top:864.75px;width:34.2px;height:1.3px;background:#000"></div><svg class="a" style="left:226px;top:877.75px;" width="16" height="17" viewBox="0 0 16 17"><rect x="1.5" y="1.5" width="12" height="10" fill="#fff" stroke="#000" stroke-width="1.5"/><rect x="4" y="4" width="7" height="4" fill="#000"/><path d="M4,12 V14 Q4,16 6,15.5" fill="none" stroke="#000" stroke-width="1.2"/></svg><div class="t" style="left:246.5px;top:878.59px;font-size:12px;font-weight:400;font-style:normal;color:#000;letter-spacing:0.327px;font-family:'Liberation Sans',sans-serif;">toolwait</div><div class="a" style="left:246.5px;top:889.75px;width:44.3px;height:1.3px;background:#000"></div><svg class="a" style="left:226px;top:902.75px;" width="16" height="15" viewBox="0 0 16 15"><g transform="translate(8,7.5)"><circle cx="4.80" cy="1.99" r="2.7" fill="#fff" stroke="#000" stroke-width="1.4"/><circle cx="1.99" cy="4.80" r="2.7" fill="#fff" stroke="#000" stroke-width="1.4"/><circle cx="-1.99" cy="4.80" r="2.7" fill="#fff" stroke="#000" stroke-width="1.4"/><circle cx="-4.80" cy="1.99" r="2.7" fill="#fff" stroke="#000" stroke-width="1.4"/><circle cx="-4.80" cy="-1.99" r="2.7" fill="#fff" stroke="#000" stroke-width="1.4"/><circle cx="-1.99" cy="-4.80" r="2.7" fill="#fff" stroke="#000" stroke-width="1.4"/><circle cx="1.99" cy="-4.80" r="2.7" fill="#fff" stroke="#000" stroke-width="1.4"/><circle cx="4.80" cy="-1.99" r="2.7" fill="#fff" stroke="#000" stroke-width="1.4"/><circle r="4.6" fill="#fff"/><line x1="2.20" y1="0.00" x2="5.00" y2="0.00" stroke="#000" stroke-width="0.9"/><line x1="1.56" y1="1.56" x2="3.54" y2="3.54" stroke="#000" stroke-width="0.9"/><line x1="0.00" y1="2.20" x2="0.00" y2="5.00" stroke="#000" stroke-width="0.9"/><line x1="-1.56" y1="1.56" x2="-3.54" y2="3.54" stroke="#000" stroke-width="0.9"/><line x1="-2.20" y1="0.00" x2="-5.00" y2="0.00" stroke="#000" stroke-width="0.9"/><line x1="-1.56" y1="-1.56" x2="-3.54" y2="-3.54" stroke="#000" stroke-width="0.9"/><line x1="-0.00" y1="-2.20" x2="-0.00" y2="-5.00" stroke="#000" stroke-width="0.9"/><line x1="1.56" y1="-1.56" x2="3.54" y2="-3.54" stroke="#000" stroke-width="0.9"/><circle r="1.4" fill="#000"/><path d="M-1.5,4 V7 M1.5,4 V7" stroke="#999" stroke-width="1"/></g></svg><div class="t" style="left:246.5px;top:903.59px;font-size:12px;font-weight:400;font-style:normal;color:#000;letter-spacing:-0.040px;font-family:'Liberation Sans',sans-serif;">workman</div><div class="a" style="left:246.5px;top:914.75px;width:49.4px;height:1.3px;background:#000"></div><svg class="a" style="left:226px;top:927.75px;" width="16" height="15" viewBox="0 0 16 15"><g transform="translate(8,7.5)"><circle cx="4.80" cy="1.99" r="2.7" fill="#fff" stroke="#000" stroke-width="1.4"/><circle cx="1.99" cy="4.80" r="2.7" fill="#fff" stroke="#000" stroke-width="1.4"/><circle cx="-1.99" cy="4.80" r="2.7" fill="#fff" stroke="#000" stroke-width="1.4"/><circle cx="-4.80" cy="1.99" r="2.7" fill="#fff" stroke="#000" stroke-width="1.4"/><circle cx="-4.80" cy="-1.99" r="2.7" fill="#fff" stroke="#000" stroke-width="1.4"/><circle cx="-1.99" cy="-4.80" r="2.7" fill="#fff" stroke="#000" stroke-width="1.4"/><circle cx="1.99" cy="-4.80" r="2.7" fill="#fff" stroke="#000" stroke-width="1.4"/><circle cx="4.80" cy="-1.99" r="2.7" fill="#fff" stroke="#000" stroke-width="1.4"/><circle r="4.6" fill="#fff"/><line x1="2.20" y1="0.00" x2="5.00" y2="0.00" stroke="#000" stroke-width="0.9"/><line x1="1.56" y1="1.56" x2="3.54" y2="3.54" stroke="#000" stroke-width="0.9"/><line x1="0.00" y1="2.20" x2="0.00" y2="5.00" stroke="#000" stroke-width="0.9"/><line x1="-1.56" y1="1.56" x2="-3.54" y2="3.54" stroke="#000" stroke-width="0.9"/><line x1="-2.20" y1="0.00" x2="-5.00" y2="0.00" stroke="#000" stroke-width="0.9"/><line x1="-1.56" y1="-1.56" x2="-3.54" y2="-3.54" stroke="#000" stroke-width="0.9"/><line x1="-0.00" y1="-2.20" x2="-0.00" y2="-5.00" stroke="#000" stroke-width="0.9"/><line x1="1.56" y1="-1.56" x2="3.54" y2="-3.54" stroke="#000" stroke-width="0.9"/><circle r="1.4" fill="#000"/><path d="M-1.5,4 V7 M1.5,4 V7" stroke="#999" stroke-width="1"/></g></svg><div class="t" style="left:246.5px;top:928.59px;font-size:12px;font-weight:400;font-style:normal;color:#000;letter-spacing:0.260px;font-family:'Liberation Sans',sans-serif;">xgettext</div><div class="a" style="left:246.5px;top:939.75px;width:45.1px;height:1.3px;background:#000"></div><svg class="a" style="left:416px;top:727.75px;" width="16" height="15" viewBox="0 0 16 15"><g transform="translate(8,7.5)"><circle cx="4.80" cy="1.99" r="2.7" fill="#fff" stroke="#000" stroke-width="1.4"/><circle cx="1.99" cy="4.80" r="2.7" fill="#fff" stroke="#000" stroke-width="1.4"/><circle cx="-1.99" cy="4.80" r="2.7" fill="#fff" stroke="#000" stroke-width="1.4"/><circle cx="-4.80" cy="1.99" r="2.7" fill="#fff" stroke="#000" stroke-width="1.4"/><circle cx="-4.80" cy="-1.99" r="2.7" fill="#fff" stroke="#000" stroke-width="1.4"/><circle cx="-1.99" cy="-4.80" r="2.7" fill="#fff" stroke="#000" stroke-width="1.4"/><circle cx="1.99" cy="-4.80" r="2.7" fill="#fff" stroke="#000" stroke-width="1.4"/><circle cx="4.80" cy="-1.99" r="2.7" fill="#fff" stroke="#000" stroke-width="1.4"/><circle r="4.6" fill="#fff"/><line x1="2.20" y1="0.00" x2="5.00" y2="0.00" stroke="#000" stroke-width="0.9"/><line x1="1.56" y1="1.56" x2="3.54" y2="3.54" stroke="#000" stroke-width="0.9"/><line x1="0.00" y1="2.20" x2="0.00" y2="5.00" stroke="#000" stroke-width="0.9"/><line x1="-1.56" y1="1.56" x2="-3.54" y2="3.54" stroke="#000" stroke-width="0.9"/><line x1="-2.20" y1="0.00" x2="-5.00" y2="0.00" stroke="#000" stroke-width="0.9"/><line x1="-1.56" y1="-1.56" x2="-3.54" y2="-3.54" stroke="#000" stroke-width="0.9"/><line x1="-0.00" y1="-2.20" x2="-0.00" y2="-5.00" stroke="#000" stroke-width="0.9"/><line x1="1.56" y1="-1.56" x2="3.54" y2="-3.54" stroke="#000" stroke-width="0.9"/><circle r="1.4" fill="#000"/><path d="M-1.5,4 V7 M1.5,4 V7" stroke="#999" stroke-width="1"/></g></svg><div class="t" style="left:436px;top:728.59px;font-size:12px;font-weight:400;font-style:normal;color:#000;letter-spacing:-0.230px;font-family:'Liberation Sans',sans-serif;">meminfo</div><div class="a" style="left:436px;top:739.75px;width:45.4px;height:1.3px;background:#000"></div><svg class="a" style="left:416px;top:752.75px;" width="16" height="15" viewBox="0 0 16 15"><g transform="translate(8,7.5)"><circle cx="4.80" cy="1.99" r="2.7" fill="#fff" stroke="#000" stroke-width="1.4"/><circle cx="1.99" cy="4.80" r="2.7" fill="#fff" stroke="#000" stroke-width="1.4"/><circle cx="-1.99" cy="4.80" r="2.7" fill="#fff" stroke="#000" stroke-width="1.4"/><circle cx="-4.80" cy="1.99" r="2.7" fill="#fff" stroke="#000" stroke-width="1.4"/><circle cx="-4.80" cy="-1.99" r="2.7" fill="#fff" stroke="#000" stroke-width="1.4"/><circle cx="-1.99" cy="-4.80" r="2.7" fill="#fff" stroke="#000" stroke-width="1.4"/><circle cx="1.99" cy="-4.80" r="2.7" fill="#fff" stroke="#000" stroke-width="1.4"/><circle cx="4.80" cy="-1.99" r="2.7" fill="#fff" stroke="#000" stroke-width="1.4"/><circle r="4.6" fill="#fff"/><line x1="2.20" y1="0.00" x2="5.00" y2="0.00" stroke="#000" stroke-width="0.9"/><line x1="1.56" y1="1.56" x2="3.54" y2="3.54" stroke="#000" stroke-width="0.9"/><line x1="0.00" y1="2.20" x2="0.00" y2="5.00" stroke="#000" stroke-width="0.9"/><line x1="-1.56" y1="1.56" x2="-3.54" y2="3.54" stroke="#000" stroke-width="0.9"/><line x1="-2.20" y1="0.00" x2="-5.00" y2="0.00" stroke="#000" stroke-width="0.9"/><line x1="-1.56" y1="-1.56" x2="-3.54" y2="-3.54" stroke="#000" stroke-width="0.9"/><line x1="-0.00" y1="-2.20" x2="-0.00" y2="-5.00" stroke="#000" stroke-width="0.9"/><line x1="1.56" y1="-1.56" x2="3.54" y2="-3.54" stroke="#000" stroke-width="0.9"/><circle r="1.4" fill="#000"/><path d="M-1.5,4 V7 M1.5,4 V7" stroke="#999" stroke-width="1"/></g></svg><div class="t" style="left:436px;top:753.59px;font-size:12px;font-weight:400;font-style:normal;color:#000;letter-spacing:0.060px;font-family:'Liberation Sans',sans-serif;">olvwm</div><div class="a" style="left:436px;top:764.75px;width:35.3px;height:1.3px;background:#000"></div><svg class="a" style="left:416px;top:777.75px;" width="16" height="15" viewBox="0 0 16 15"><g transform="translate(8,7.5)"><circle cx="4.80" cy="1.99" r="2.7" fill="#fff" stroke="#000" stroke-width="1.4"/><circle cx="1.99" cy="4.80" r="2.7" fill="#fff" stroke="#000" stroke-width="1.4"/><circle cx="-1.99" cy="4.80" r="2.7" fill="#fff" stroke="#000" stroke-width="1.4"/><circle cx="-4.80" cy="1.99" r="2.7" fill="#fff" stroke="#000" stroke-width="1.4"/><circle cx="-4.80" cy="-1.99" r="2.7" fill="#fff" stroke="#000" stroke-width="1.4"/><circle cx="-1.99" cy="-4.80" r="2.7" fill="#fff" stroke="#000" stroke-width="1.4"/><circle cx="1.99" cy="-4.80" r="2.7" fill="#fff" stroke="#000" stroke-width="1.4"/><circle cx="4.80" cy="-1.99" r="2.7" fill="#fff" stroke="#000" stroke-width="1.4"/><circle r="4.6" fill="#fff"/><line x1="2.20" y1="0.00" x2="5.00" y2="0.00" stroke="#000" stroke-width="0.9"/><line x1="1.56" y1="1.56" x2="3.54" y2="3.54" stroke="#000" stroke-width="0.9"/><line x1="0.00" y1="2.20" x2="0.00" y2="5.00" stroke="#000" stroke-width="0.9"/><line x1="-1.56" y1="1.56" x2="-3.54" y2="3.54" stroke="#000" stroke-width="0.9"/><line x1="-2.20" y1="0.00" x2="-5.00" y2="0.00" stroke="#000" stroke-width="0.9"/><line x1="-1.56" y1="-1.56" x2="-3.54" y2="-3.54" stroke="#000" stroke-width="0.9"/><line x1="-0.00" y1="-2.20" x2="-0.00" y2="-5.00" stroke="#000" stroke-width="0.9"/><line x1="1.56" y1="-1.56" x2="3.54" y2="-3.54" stroke="#000" stroke-width="0.9"/><circle r="1.4" fill="#000"/><path d="M-1.5,4 V7 M1.5,4 V7" stroke="#999" stroke-width="1"/></g></svg><div class="t" style="left:436px;top:778.59px;font-size:12px;font-weight:400;font-style:normal;color:#000;letter-spacing:0.165px;font-family:'Liberation Sans',sans-serif;">olwmslave</div><div class="a" style="left:436px;top:789.75px;width:58.5px;height:1.3px;background:#000"></div><svg class="a" style="left:416px;top:802.75px;" width="16" height="17" viewBox="0 0 16 17"><rect x="1.5" y="1.5" width="12" height="10" fill="#fff" stroke="#000" stroke-width="1.5"/><rect x="4" y="4" width="7" height="4" fill="#000"/><path d="M4,12 V14 Q4,16 6,15.5" fill="none" stroke="#000" stroke-width="1.2"/></svg><div class="t" style="left:436px;top:803.59px;font-size:12px;font-weight:400;font-style:normal;color:#000;letter-spacing:0.297px;font-family:'Liberation Sans',sans-serif;">owplaces</div><div class="a" style="left:436px;top:814.75px;width:53.4px;height:1.3px;background:#000"></div><svg class="a" style="left:416px;top:827.75px;" width="16" height="15" viewBox="0 0 16 15"><g transform="translate(8,7.5)"><circle cx="4.80" cy="1.99" r="2.7" fill="#fff" stroke="#000" stroke-width="1.4"/><circle cx="1.99" cy="4.80" r="2.7" fill="#fff" stroke="#000" stroke-width="1.4"/><circle cx="-1.99" cy="4.80" r="2.7" fill="#fff" stroke="#000" stroke-width="1.4"/><circle cx="-4.80" cy="1.99" r="2.7" fill="#fff" stroke="#000" stroke-width="1.4"/><circle cx="-4.80" cy="-1.99" r="2.7" fill="#fff" stroke="#000" stroke-width="1.4"/><circle cx="-1.99" cy="-4.80" r="2.7" fill="#fff" stroke="#000" stroke-width="1.4"/><circle cx="1.99" cy="-4.80" r="2.7" fill="#fff" stroke="#000" stroke-width="1.4"/><circle cx="4.80" cy="-1.99" r="2.7" fill="#fff" stroke="#000" stroke-width="1.4"/><circle r="4.6" fill="#fff"/><line x1="2.20" y1="0.00" x2="5.00" y2="0.00" stroke="#000" stroke-width="0.9"/><line x1="1.56" y1="1.56" x2="3.54" y2="3.54" stroke="#000" stroke-width="0.9"/><line x1="0.00" y1="2.20" x2="0.00" y2="5.00" stroke="#000" stroke-width="0.9"/><line x1="-1.56" y1="1.56" x2="-3.54" y2="3.54" stroke="#000" stroke-width="0.9"/><line x1="-2.20" y1="0.00" x2="-5.00" y2="0.00" stroke="#000" stroke-width="0.9"/><line x1="-1.56" y1="-1.56" x2="-3.54" y2="-3.54" stroke="#000" stroke-width="0.9"/><line x1="-0.00" y1="-2.20" x2="-0.00" y2="-5.00" stroke="#000" stroke-width="0.9"/><line x1="1.56" y1="-1.56" x2="3.54" y2="-3.54" stroke="#000" stroke-width="0.9"/><circle r="1.4" fill="#000"/><path d="M-1.5,4 V7 M1.5,4 V7" stroke="#999" stroke-width="1"/></g></svg><div class="t" style="left:436px;top:828.59px;font-size:12px;font-weight:400;font-style:italic;color:#000;letter-spacing:0.286px;font-family:'Liberation Sans',sans-serif;">shelltool</div><div class="a" style="left:436px;top:839.75px;width:47.6px;height:1.3px;background:#000"></div><svg class="a" style="left:416px;top:852.75px;" width="16" height="15" viewBox="0 0 16 15"><g transform="translate(8,7.5)"><circle cx="5.30" cy="0.00" r="2.6" fill="#3a3a90" stroke="#1a1a50" stroke-width="1.1"/><circle cx="3.75" cy="3.75" r="2.6" fill="#3a3a90" stroke="#1a1a50" stroke-width="1.1"/><circle cx="0.00" cy="5.30" r="2.6" fill="#3a3a90" stroke="#1a1a50" stroke-width="1.1"/><circle cx="-3.75" cy="3.75" r="2.6" fill="#3a3a90" stroke="#1a1a50" stroke-width="1.1"/><circle cx="-5.30" cy="0.00" r="2.6" fill="#3a3a90" stroke="#1a1a50" stroke-width="1.1"/><circle cx="-3.75" cy="-3.75" r="2.6" fill="#3a3a90" stroke="#1a1a50" stroke-width="1.1"/><circle cx="-0.00" cy="-5.30" r="2.6" fill="#3a3a90" stroke="#1a1a50" stroke-width="1.1"/><circle cx="3.75" cy="-3.75" r="2.6" fill="#3a3a90" stroke="#1a1a50" stroke-width="1.1"/><circle r="4.8" fill="#4a4aa0"/><circle r="1.3" fill="#000"/></g></svg><div class="a" style="left:436px;top:853.75px;width:42.6px;height:14px;background:#24246e"></div><div class="t" style="left:436px;top:853.59px;font-size:12px;font-weight:400;font-style:normal;color:#fff;letter-spacing:0.364px;font-family:'Liberation Sans',sans-serif;">textedit</div><div class="a" style="left:436px;top:865.25px;width:42.6px;height:1px;background:#fff"></div><svg class="a" style="left:416px;top:877.75px;" width="16" height="17" viewBox="0 0 16 17"><rect x="1.5" y="1.5" width="12" height="10" fill="#fff" stroke="#000" stroke-width="1.5"/><rect x="4" y="4" width="7" height="4" fill="#000"/><path d="M4,12 V14 Q4,16 6,15.5" fill="none" stroke="#000" stroke-width="1.2"/></svg><div class="t" style="left:436px;top:878.59px;font-size:12px;font-weight:400;font-style:normal;color:#000;letter-spacing:0.412px;font-family:'Liberation Sans',sans-serif;">winsysck</div><div class="a" style="left:436px;top:889.75px;width:52.3px;height:1.3px;background:#000"></div><svg class="a" style="left:416px;top:902.75px;" width="16" height="15" viewBox="0 0 16 15"><g transform="translate(8,7.5)"><circle cx="4.80" cy="1.99" r="2.7" fill="#fff" stroke="#000" stroke-width="1.4"/><circle cx="1.99" cy="4.80" r="2.7" fill="#fff" stroke="#000" stroke-width="1.4"/><circle cx="-1.99" cy="4.80" r="2.7" fill="#fff" stroke="#000" stroke-width="1.4"/><circle cx="-4.80" cy="1.99" r="2.7" fill="#fff" stroke="#000" stroke-width="1.4"/><circle cx="-4.80" cy="-1.99" r="2.7" fill="#fff" stroke="#000" stroke-width="1.4"/><circle cx="-1.99" cy="-4.80" r="2.7" fill="#fff" stroke="#000" stroke-width="1.4"/><circle cx="1.99" cy="-4.80" r="2.7" fill="#fff" stroke="#000" stroke-width="1.4"/><circle cx="4.80" cy="-1.99" r="2.7" fill="#fff" stroke="#000" stroke-width="1.4"/><circle r="4.6" fill="#fff"/><line x1="2.20" y1="0.00" x2="5.00" y2="0.00" stroke="#000" stroke-width="0.9"/><line x1="1.56" y1="1.56" x2="3.54" y2="3.54" stroke="#000" stroke-width="0.9"/><line x1="0.00" y1="2.20" x2="0.00" y2="5.00" stroke="#000" stroke-width="0.9"/><line x1="-1.56" y1="1.56" x2="-3.54" y2="3.54" stroke="#000" stroke-width="0.9"/><line x1="-2.20" y1="0.00" x2="-5.00" y2="0.00" stroke="#000" stroke-width="0.9"/><line x1="-1.56" y1="-1.56" x2="-3.54" y2="-3.54" stroke="#000" stroke-width="0.9"/><line x1="-0.00" y1="-2.20" x2="-0.00" y2="-5.00" stroke="#000" stroke-width="0.9"/><line x1="1.56" y1="-1.56" x2="3.54" y2="-3.54" stroke="#000" stroke-width="0.9"/><circle r="1.4" fill="#000"/><path d="M-1.5,4 V7 M1.5,4 V7" stroke="#999" stroke-width="1"/></g></svg><div class="t" style="left:436px;top:903.59px;font-size:12px;font-weight:400;font-style:normal;color:#000;letter-spacing:0.422px;font-family:'Liberation Sans',sans-serif;">xcenter</div><div class="a" style="left:436px;top:914.75px;width:43.3px;height:1.3px;background:#000"></div><div class="a" style="left:673px;top:637px;width:572px;height:256px;box-sizing:border-box;border:2px solid #000;background:#c4c4c4"></div><svg class="a" style="left:681px;top:644px;" width="15" height="15" viewBox="0 0 15 15"><rect x="0" y="0" width="15" height="15" fill="#c4c4c4" fill-opacity="0"/><polyline points="0.5,15 0.5,0.5 15,0.5" fill="none" stroke="#fff"/><polyline points="14.5,0 14.5,14.5 0,14.5" fill="none" stroke="#6e6e6e"/><polyline points="4,5.5 11.5,5.5" fill="none" stroke="#555"/><polyline points="4.5,5.5 7.5,11" fill="none" stroke="#555"/><polyline points="11,5.5 7.5,11.5" fill="none" stroke="#fff"/></svg><div class="t" style="left:705.5px;top:644.84px;font-size:12px;font-weight:700;font-style:normal;color:#7f7f7f;letter-spacing:0.138px;font-family:'Liberation Sans',sans-serif;">Linux Meminfo  v1.1</div><div class="a" style="left:679px;top:663px;width:560px;height:224px;background:#cecece"></div><div class="a" style="left:679px;top:663px;width:560px;height:1px;background:#7a7a7a"></div><div class="a" style="left:679px;top:664px;width:560px;height:1px;background:#fff"></div><svg class="a" style="left:673px;top:637px;" width="11" height="11" viewBox="0 0 11 11"><polygon points="0,0 11,0 11,5 5,5 5,11 0,11" fill="#c8c8c8"/><line x1="0.0" y1="0.5" x2="11.0" y2="0.5" stroke="#ffffff" stroke-width="1"/><line x1="10.5" y1="0.0" x2="10.5" y2="5.0" stroke="#6a6a6a" stroke-width="1"/><line x1="11.0" y1="4.5" x2="5.0" y2="4.5" stroke="#6a6a6a" stroke-width="1"/><line x1="4.5" y1="5.0" x2="4.5" y2="11.0" stroke="#6a6a6a" stroke-width="1"/><line x1="5.0" y1="10.5" x2="0.0" y2="10.5" stroke="#6a6a6a" stroke-width="1"/><line x1="0.5" y1="11.0" x2="0.5" y2="0.0" stroke="#ffffff" stroke-width="1"/></svg><svg class="a" style="left:1234px;top:637px;" width="11" height="11" viewBox="0 0 11 11"><polygon points="11,0 0,0 0,5 6,5 6,11 11,11" fill="#c8c8c8"/><line x1="11.0" y1="0.5" x2="0.0" y2="0.5" stroke="#ffffff" stroke-width="1"/><line x1="0.5" y1="0.0" x2="0.5" y2="5.0" stroke="#ffffff" stroke-width="1"/><line x1="0.0" y1="4.5" x2="6.0" y2="4.5" stroke="#6a6a6a" stroke-width="1"/><line x1="6.5" y1="5.0" x2="6.5" y2="11.0" stroke="#ffffff" stroke-width="1"/><line x1="6.0" y1="10.5" x2="11.0" y2="10.5" stroke="#6a6a6a" stroke-width="1"/><line x1="10.5" y1="11.0" x2="10.5" y2="0.0" stroke="#6a6a6a" stroke-width="1"/></svg><svg class="a" style="left:673px;top:882px;" width="11" height="11" viewBox="0 0 11 11"><polygon points="0,11 11,11 11,6 5,6 5,0 0,0" fill="#c8c8c8"/><line x1="0.0" y1="10.5" x2="11.0" y2="10.5" stroke="#6a6a6a" stroke-width="1"/><line x1="10.5" y1="11.0" x2="10.5" y2="6.0" stroke="#6a6a6a" stroke-width="1"/><line x1="11.0" y1="6.5" x2="5.0" y2="6.5" stroke="#ffffff" stroke-width="1"/><line x1="4.5" y1="6.0" x2="4.5" y2="0.0" stroke="#6a6a6a" stroke-width="1"/><line x1="5.0" y1="0.5" x2="0.0" y2="0.5" stroke="#ffffff" stroke-width="1"/><line x1="0.5" y1="0.0" x2="0.5" y2="11.0" stroke="#ffffff" stroke-width="1"/></svg><svg class="a" style="left:1234px;top:882px;" width="11" height="11" viewBox="0 0 11 11"><polygon points="11,11 0,11 0,6 6,6 6,0 11,0" fill="#c8c8c8"/><line x1="11.0" y1="10.5" x2="0.0" y2="10.5" stroke="#6a6a6a" stroke-width="1"/><line x1="0.5" y1="11.0" x2="0.5" y2="6.0" stroke="#ffffff" stroke-width="1"/><line x1="0.0" y1="6.5" x2="6.0" y2="6.5" stroke="#ffffff" stroke-width="1"/><line x1="6.5" y1="6.0" x2="6.5" y2="0.0" stroke="#ffffff" stroke-width="1"/><line x1="6.0" y1="0.5" x2="11.0" y2="0.5" stroke="#ffffff" stroke-width="1"/><line x1="10.5" y1="0.0" x2="10.5" y2="11.0" stroke="#6a6a6a" stroke-width="1"/></svg><div class="t" style="left:688.2px;top:677.84px;font-size:12px;font-weight:400;font-style:normal;color:#000;letter-spacing:0.611px;font-family:'Liberation Sans',sans-serif;">Memory</div><div class="t" style="left:748px;top:677.84px;font-size:12px;font-weight:400;font-style:normal;color:#000;letter-spacing:1.038px;font-family:'Liberation Sans',sans-serif;">(total 31764480)</div><div class="t" style="left:887px;top:677.84px;font-size:12px;font-weight:400;font-style:normal;color:#000;letter-spacing:0.917px;font-family:'Liberation Sans',sans-serif;">Swap (total 41279488)</div><div class="t" style="left:1092.4px;top:677.84px;font-size:12px;font-weight:400;font-style:normal;color:#000;letter-spacing:0.289px;font-family:'Liberation Sans',sans-serif;">Load Averages</div><div class="t" style="left:688px;top:700.42px;font-size:12.5px;font-weight:700;font-style:normal;color:#000;letter-spacing:0.484px;font-family:'Liberation Sans',sans-serif;">Used</div><div class="t" style="left:753.7px;top:700.42px;font-size:12.5px;font-weight:700;font-style:normal;color:#000;letter-spacing:0.604px;font-family:'Liberation Sans',sans-serif;">Shared</div><div class="t" style="left:832.6px;top:700.42px;font-size:12.5px;font-weight:700;font-style:normal;color:#000;letter-spacing:0.892px;font-family:'Liberation Sans',sans-serif;">Buffers</div><div class="t" style="left:935.4px;top:700.42px;font-size:12.5px;font-weight:700;font-style:normal;color:#000;letter-spacing:0.638px;font-family:'Liberation Sans',sans-serif;">Swap</div><div class="t" style="left:1028px;top:700.42px;font-size:12.5px;font-weight:700;font-style:normal;color:#000;letter-spacing:0.811px;font-family:'Liberation Sans',sans-serif;">1 Min</div><div class="t" style="left:1093.7px;top:700.42px;font-size:12.5px;font-weight:700;font-style:normal;color:#000;letter-spacing:1.011px;font-family:'Liberation Sans',sans-serif;">5 Min</div><div class="t" style="left:1159.4px;top:700.42px;font-size:12.5px;font-weight:700;font-style:normal;color:#000;letter-spacing:1.018px;font-family:'Liberation Sans',sans-serif;">15 Min</div><svg class="a" style="left:729px;top:699px;" width="11" height="140" viewBox="0 0 11 140"><path d="M0.5,139 V5 Q0.5,0.5 4,0.5 H7 Q10.5,0.5 10.5,5 V136 Q10.5,139.5 7,139.5 H4 Q0.5,139.5 0.5,136" fill="#bcbcbc" stroke="none"/><path d="M0.5,136 V5 L4,0.8 H7.5 L10,4" fill="none" stroke="#777" stroke-width="1"/><path d="M10.5,4 V136 L7,139.5 H4 L1.5,137" fill="none" stroke="#fff" stroke-width="1"/><rect x="3" y="13" width="5" height="122.5" fill="#000"/><rect x="4" y="14" width="0.8" height="121" fill="#aaa"/></svg><div class="a" style="left:740px;top:708px;width:1px;height:2px;background:#fff"></div><div class="a" style="left:741px;top:709px;width:3px;height:1px;background:#555"></div><div class="a" style="left:740px;top:714px;width:1px;height:2px;background:#fff"></div><div class="a" style="left:741px;top:715px;width:3px;height:1px;background:#555"></div><div class="a" style="left:740px;top:720px;width:1px;height:2px;background:#fff"></div><div class="a" style="left:741px;top:721px;width:3px;height:1px;background:#555"></div><div class="a" style="left:740px;top:725px;width:1px;height:2px;background:#fff"></div><div class="a" style="left:741px;top:726px;width:3px;height:1px;background:#555"></div><div class="a" style="left:740px;top:731px;width:1px;height:2px;background:#fff"></div><div class="a" style="left:741px;top:732px;width:3px;height:1px;background:#555"></div><div class="a" style="left:740px;top:737px;width:1px;height:2px;background:#fff"></div><div class="a" style="left:741px;top:738px;width:3px;height:1px;background:#555"></div><div class="a" style="left:740px;top:742px;width:1px;height:2px;background:#fff"></div><div class="a" style="left:741px;top:743px;width:3px;height:1px;background:#555"></div><div class="a" style="left:740px;top:748px;width:1px;height:2px;background:#fff"></div><div class="a" style="left:741px;top:749px;width:3px;height:1px;background:#555"></div><div class="a" style="left:740px;top:754px;width:1px;height:2px;background:#fff"></div><div class="a" style="left:741px;top:755px;width:3px;height:1px;background:#555"></div><div class="a" style="left:740px;top:760px;width:1px;height:2px;background:#fff"></div><div class="a" style="left:741px;top:761px;width:3px;height:1px;background:#555"></div><div class="a" style="left:740px;top:766px;width:1px;height:2px;background:#fff"></div><div class="a" style="left:741px;top:767px;width:3px;height:1px;background:#555"></div><div class="a" style="left:740px;top:771px;width:1px;height:2px;background:#fff"></div><div class="a" style="left:741px;top:772px;width:3px;height:1px;background:#555"></div><div class="a" style="left:740px;top:777px;width:1px;height:2px;background:#fff"></div><div class="a" style="left:741px;top:778px;width:3px;height:1px;background:#555"></div><div class="a" style="left:740px;top:783px;width:1px;height:2px;background:#fff"></div><div class="a" style="left:741px;top:784px;width:3px;height:1px;background:#555"></div><div class="a" style="left:740px;top:788px;width:1px;height:2px;background:#fff"></div><div class="a" style="left:741px;top:789px;width:3px;height:1px;background:#555"></div><div class="a" style="left:740px;top:794px;width:1px;height:2px;background:#fff"></div><div class="a" style="left:741px;top:795px;width:3px;height:1px;background:#555"></div><div class="a" style="left:740px;top:800px;width:1px;height:2px;background:#fff"></div><div class="a" style="left:741px;top:801px;width:3px;height:1px;background:#555"></div><div class="a" style="left:740px;top:806px;width:1px;height:2px;background:#fff"></div><div class="a" style="left:741px;top:807px;width:3px;height:1px;background:#555"></div><div class="a" style="left:740px;top:812px;width:1px;height:2px;background:#fff"></div><div class="a" style="left:741px;top:813px;width:3px;height:1px;background:#555"></div><div class="a" style="left:740px;top:817px;width:1px;height:2px;background:#fff"></div><div class="a" style="left:741px;top:818px;width:3px;height:1px;background:#555"></div><svg class="a" style="left:808px;top:699px;" width="11" height="140" viewBox="0 0 11 140"><path d="M0.5,139 V5 Q0.5,0.5 4,0.5 H7 Q10.5,0.5 10.5,5 V136 Q10.5,139.5 7,139.5 H4 Q0.5,139.5 0.5,136" fill="#bcbcbc" stroke="none"/><path d="M0.5,136 V5 L4,0.8 H7.5 L10,4" fill="none" stroke="#777" stroke-width="1"/><path d="M10.5,4 V136 L7,139.5 H4 L1.5,137" fill="none" stroke="#fff" stroke-width="1"/><rect x="3" y="7" width="5" height="128.5" fill="#000"/><rect x="4" y="8" width="0.8" height="127" fill="#aaa"/></svg><div class="a" style="left:819px;top:708px;width:1px;height:2px;background:#fff"></div><div class="a" style="left:820px;top:709px;width:3px;height:1px;background:#555"></div><div class="a" style="left:819px;top:714px;width:1px;height:2px;background:#fff"></div><div class="a" style="left:820px;top:715px;width:3px;height:1px;background:#555"></div><div class="a" style="left:819px;top:720px;width:1px;height:2px;background:#fff"></div><div class="a" style="left:820px;top:721px;width:3px;height:1px;background:#555"></div><div class="a" style="left:819px;top:725px;width:1px;height:2px;background:#fff"></div><div class="a" style="left:820px;top:726px;width:3px;height:1px;background:#555"></div><div class="a" style="left:819px;top:731px;width:1px;height:2px;background:#fff"></div><div class="a" style="left:820px;top:732px;width:3px;height:1px;background:#555"></div><div class="a" style="left:819px;top:737px;width:1px;height:2px;background:#fff"></div><div class="a" style="left:820px;top:738px;width:3px;height:1px;background:#555"></div><div class="a" style="left:819px;top:742px;width:1px;height:2px;background:#fff"></div><div class="a" style="left:820px;top:743px;width:3px;height:1px;background:#555"></div><div class="a" style="left:819px;top:748px;width:1px;height:2px;background:#fff"></div><div class="a" style="left:820px;top:749px;width:3px;height:1px;background:#555"></div><div class="a" style="left:819px;top:754px;width:1px;height:2px;background:#fff"></div><div class="a" style="left:820px;top:755px;width:3px;height:1px;background:#555"></div><div class="a" style="left:819px;top:760px;width:1px;height:2px;background:#fff"></div><div class="a" style="left:820px;top:761px;width:3px;height:1px;background:#555"></div><div class="a" style="left:819px;top:766px;width:1px;height:2px;background:#fff"></div><div class="a" style="left:820px;top:767px;width:3px;height:1px;background:#555"></div><div class="a" style="left:819px;top:771px;width:1px;height:2px;background:#fff"></div><div class="a" style="left:820px;top:772px;width:3px;height:1px;background:#555"></div><div class="a" style="left:819px;top:777px;width:1px;height:2px;background:#fff"></div><div class="a" style="left:820px;top:778px;width:3px;height:1px;background:#555"></div><div class="a" style="left:819px;top:783px;width:1px;height:2px;background:#fff"></div><div class="a" style="left:820px;top:784px;width:3px;height:1px;background:#555"></div><div class="a" style="left:819px;top:788px;width:1px;height:2px;background:#fff"></div><div class="a" style="left:820px;top:789px;width:3px;height:1px;background:#555"></div><div class="a" style="left:819px;top:794px;width:1px;height:2px;background:#fff"></div><div class="a" style="left:820px;top:795px;width:3px;height:1px;background:#555"></div><div class="a" style="left:819px;top:800px;width:1px;height:2px;background:#fff"></div><div class="a" style="left:820px;top:801px;width:3px;height:1px;background:#555"></div><div class="a" style="left:819px;top:806px;width:1px;height:2px;background:#fff"></div><div class="a" style="left:820px;top:807px;width:3px;height:1px;background:#555"></div><div class="a" style="left:819px;top:812px;width:1px;height:2px;background:#fff"></div><div class="a" style="left:820px;top:813px;width:3px;height:1px;background:#555"></div><div class="a" style="left:819px;top:817px;width:1px;height:2px;background:#fff"></div><div class="a" style="left:820px;top:818px;width:3px;height:1px;background:#555"></div><svg class="a" style="left:891px;top:699px;" width="11" height="140" viewBox="0 0 11 140"><path d="M0.5,139 V5 Q0.5,0.5 4,0.5 H7 Q10.5,0.5 10.5,5 V136 Q10.5,139.5 7,139.5 H4 Q0.5,139.5 0.5,136" fill="#bcbcbc" stroke="none"/><path d="M0.5,136 V5 L4,0.8 H7.5 L10,4" fill="none" stroke="#777" stroke-width="1"/><path d="M10.5,4 V136 L7,139.5 H4 L1.5,137" fill="none" stroke="#fff" stroke-width="1"/><rect x="3" y="133" width="5" height="2.5" fill="#000"/><rect x="4" y="134" width="0.8" height="1" fill="#aaa"/></svg><div class="a" style="left:902px;top:708px;width:1px;height:2px;background:#fff"></div><div class="a" style="left:903px;top:709px;width:3px;height:1px;background:#555"></div><div class="a" style="left:902px;top:714px;width:1px;height:2px;background:#fff"></div><div class="a" style="left:903px;top:715px;width:3px;height:1px;background:#555"></div><div class="a" style="left:902px;top:720px;width:1px;height:2px;background:#fff"></div><div class="a" style="left:903px;top:721px;width:3px;height:1px;background:#555"></div><div class="a" style="left:902px;top:725px;width:1px;height:2px;background:#fff"></div><div class="a" style="left:903px;top:726px;width:3px;height:1px;background:#555"></div><div class="a" style="left:902px;top:731px;width:1px;height:2px;background:#fff"></div><div class="a" style="left:903px;top:732px;width:3px;height:1px;background:#555"></div><div class="a" style="left:902px;top:737px;width:1px;height:2px;background:#fff"></div><div class="a" style="left:903px;top:738px;width:3px;height:1px;background:#555"></div><div class="a" style="left:902px;top:742px;width:1px;height:2px;background:#fff"></div><div class="a" style="left:903px;top:743px;width:3px;height:1px;background:#555"></div><div class="a" style="left:902px;top:748px;width:1px;height:2px;background:#fff"></div><div class="a" style="left:903px;top:749px;width:3px;height:1px;background:#555"></div><div class="a" style="left:902px;top:754px;width:1px;height:2px;background:#fff"></div><div class="a" style="left:903px;top:755px;width:3px;height:1px;background:#555"></div><div class="a" style="left:902px;top:760px;width:1px;height:2px;background:#fff"></div><div class="a" style="left:903px;top:761px;width:3px;height:1px;background:#555"></div><div class="a" style="left:902px;top:766px;width:1px;height:2px;background:#fff"></div><div class="a" style="left:903px;top:767px;width:3px;height:1px;background:#555"></div><div class="a" style="left:902px;top:771px;width:1px;height:2px;background:#fff"></div><div class="a" style="left:903px;top:772px;width:3px;height:1px;background:#555"></div><div class="a" style="left:902px;top:777px;width:1px;height:2px;background:#fff"></div><div class="a" style="left:903px;top:778px;width:3px;height:1px;background:#555"></div><div class="a" style="left:902px;top:783px;width:1px;height:2px;background:#fff"></div><div class="a" style="left:903px;top:784px;width:3px;height:1px;background:#555"></div><div class="a" style="left:902px;top:788px;width:1px;height:2px;background:#fff"></div><div class="a" style="left:903px;top:789px;width:3px;height:1px;background:#555"></div><div class="a" style="left:902px;top:794px;width:1px;height:2px;background:#fff"></div><div class="a" style="left:903px;top:795px;width:3px;height:1px;background:#555"></div><div class="a" style="left:902px;top:800px;width:1px;height:2px;background:#fff"></div><div class="a" style="left:903px;top:801px;width:3px;height:1px;background:#555"></div><div class="a" style="left:902px;top:806px;width:1px;height:2px;background:#fff"></div><div class="a" style="left:903px;top:807px;width:3px;height:1px;background:#555"></div><div class="a" style="left:902px;top:812px;width:1px;height:2px;background:#fff"></div><div class="a" style="left:903px;top:813px;width:3px;height:1px;background:#555"></div><div class="a" style="left:902px;top:817px;width:1px;height:2px;background:#fff"></div><div class="a" style="left:903px;top:818px;width:3px;height:1px;background:#555"></div><svg class="a" style="left:979px;top:699px;" width="11" height="140" viewBox="0 0 11 140"><path d="M0.5,139 V5 Q0.5,0.5 4,0.5 H7 Q10.5,0.5 10.5,5 V136 Q10.5,139.5 7,139.5 H4 Q0.5,139.5 0.5,136" fill="#bcbcbc" stroke="none"/><path d="M0.5,136 V5 L4,0.8 H7.5 L10,4" fill="none" stroke="#777" stroke-width="1"/><path d="M10.5,4 V136 L7,139.5 H4 L1.5,137" fill="none" stroke="#fff" stroke-width="1"/><rect x="3" y="133" width="5" height="2.5" fill="#000"/><rect x="4" y="134" width="0.8" height="1" fill="#aaa"/></svg><div class="a" style="left:990px;top:708px;width:1px;height:2px;background:#fff"></div><div class="a" style="left:991px;top:709px;width:3px;height:1px;background:#555"></div><div class="a" style="left:990px;top:714px;width:1px;height:2px;background:#fff"></div><div class="a" style="left:991px;top:715px;width:3px;height:1px;background:#555"></div><div class="a" style="left:990px;top:720px;width:1px;height:2px;background:#fff"></div><div class="a" style="left:991px;top:721px;width:3px;height:1px;background:#555"></div><div class="a" style="left:990px;top:725px;width:1px;height:2px;background:#fff"></div><div class="a" style="left:991px;top:726px;width:3px;height:1px;background:#555"></div><div class="a" style="left:990px;top:731px;width:1px;height:2px;background:#fff"></div><div class="a" style="left:991px;top:732px;width:3px;height:1px;background:#555"></div><div class="a" style="left:990px;top:737px;width:1px;height:2px;background:#fff"></div><div class="a" style="left:991px;top:738px;width:3px;height:1px;background:#555"></div><div class="a" style="left:990px;top:742px;width:1px;height:2px;background:#fff"></div><div class="a" style="left:991px;top:743px;width:3px;height:1px;background:#555"></div><div class="a" style="left:990px;top:748px;width:1px;height:2px;background:#fff"></div><div class="a" style="left:991px;top:749px;width:3px;height:1px;background:#555"></div><div class="a" style="left:990px;top:754px;width:1px;height:2px;background:#fff"></div><div class="a" style="left:991px;top:755px;width:3px;height:1px;background:#555"></div><div class="a" style="left:990px;top:760px;width:1px;height:2px;background:#fff"></div><div class="a" style="left:991px;top:761px;width:3px;height:1px;background:#555"></div><div class="a" style="left:990px;top:766px;width:1px;height:2px;background:#fff"></div><div class="a" style="left:991px;top:767px;width:3px;height:1px;background:#555"></div><div class="a" style="left:990px;top:771px;width:1px;height:2px;background:#fff"></div><div class="a" style="left:991px;top:772px;width:3px;height:1px;background:#555"></div><div class="a" style="left:990px;top:777px;width:1px;height:2px;background:#fff"></div><div class="a" style="left:991px;top:778px;width:3px;height:1px;background:#555"></div><div class="a" style="left:990px;top:783px;width:1px;height:2px;background:#fff"></div><div class="a" style="left:991px;top:784px;width:3px;height:1px;background:#555"></div><div class="a" style="left:990px;top:788px;width:1px;height:2px;background:#fff"></div><div class="a" style="left:991px;top:789px;width:3px;height:1px;background:#555"></div><div class="a" style="left:990px;top:794px;width:1px;height:2px;background:#fff"></div><div class="a" style="left:991px;top:795px;width:3px;height:1px;background:#555"></div><div class="a" style="left:990px;top:800px;width:1px;height:2px;background:#fff"></div><div class="a" style="left:991px;top:801px;width:3px;height:1px;background:#555"></div><div class="a" style="left:990px;top:806px;width:1px;height:2px;background:#fff"></div><div class="a" style="left:991px;top:807px;width:3px;height:1px;background:#555"></div><div class="a" style="left:990px;top:812px;width:1px;height:2px;background:#fff"></div><div class="a" style="left:991px;top:813px;width:3px;height:1px;background:#555"></div><div class="a" style="left:990px;top:817px;width:1px;height:2px;background:#fff"></div><div class="a" style="left:991px;top:818px;width:3px;height:1px;background:#555"></div><svg class="a" style="left:1073px;top:699px;" width="11" height="140" viewBox="0 0 11 140"><path d="M0.5,139 V5 Q0.5,0.5 4,0.5 H7 Q10.5,0.5 10.5,5 V136 Q10.5,139.5 7,139.5 H4 Q0.5,139.5 0.5,136" fill="#bcbcbc" stroke="none"/><path d="M0.5,136 V5 L4,0.8 H7.5 L10,4" fill="none" stroke="#777" stroke-width="1"/><path d="M10.5,4 V136 L7,139.5 H4 L1.5,137" fill="none" stroke="#fff" stroke-width="1"/><rect x="3" y="122" width="5" height="13.5" fill="#000"/><rect x="4" y="123" width="0.8" height="12" fill="#aaa"/></svg><div class="a" style="left:1084px;top:708px;width:1px;height:2px;background:#fff"></div><div class="a" style="left:1085px;top:709px;width:3px;height:1px;background:#555"></div><div class="a" style="left:1084px;top:739px;width:1px;height:2px;background:#fff"></div><div class="a" style="left:1085px;top:740px;width:3px;height:1px;background:#555"></div><div class="a" style="left:1084px;top:769px;width:1px;height:2px;background:#fff"></div><div class="a" style="left:1085px;top:770px;width:3px;height:1px;background:#555"></div><div class="a" style="left:1084px;top:801px;width:1px;height:2px;background:#fff"></div><div class="a" style="left:1085px;top:802px;width:3px;height:1px;background:#555"></div><div class="a" style="left:1084px;top:830px;width:1px;height:2px;background:#fff"></div><div class="a" style="left:1085px;top:831px;width:3px;height:1px;background:#555"></div><svg class="a" style="left:1139px;top:699px;" width="11" height="140" viewBox="0 0 11 140"><path d="M0.5,139 V5 Q0.5,0.5 4,0.5 H7 Q10.5,0.5 10.5,5 V136 Q10.5,139.5 7,139.5 H4 Q0.5,139.5 0.5,136" fill="#bcbcbc" stroke="none"/><path d="M0.5,136 V5 L4,0.8 H7.5 L10,4" fill="none" stroke="#777" stroke-width="1"/><path d="M10.5,4 V136 L7,139.5 H4 L1.5,137" fill="none" stroke="#fff" stroke-width="1"/><rect x="3" y="122" width="5" height="13.5" fill="#000"/><rect x="4" y="123" width="0.8" height="12" fill="#aaa"/></svg><div class="a" style="left:1150px;top:708px;width:1px;height:2px;background:#fff"></div><div class="a" style="left:1151px;top:709px;width:3px;height:1px;background:#555"></div><div class="a" style="left:1150px;top:739px;width:1px;height:2px;background:#fff"></div><div class="a" style="left:1151px;top:740px;width:3px;height:1px;background:#555"></div><div class="a" style="left:1150px;top:769px;width:1px;height:2px;background:#fff"></div><div class="a" style="left:1151px;top:770px;width:3px;height:1px;background:#555"></div><div class="a" style="left:1150px;top:801px;width:1px;height:2px;background:#fff"></div><div class="a" style="left:1151px;top:802px;width:3px;height:1px;background:#555"></div><div class="a" style="left:1150px;top:830px;width:1px;height:2px;background:#fff"></div><div class="a" style="left:1151px;top:831px;width:3px;height:1px;background:#555"></div><svg class="a" style="left:1213px;top:699px;" width="11" height="140" viewBox="0 0 11 140"><path d="M0.5,139 V5 Q0.5,0.5 4,0.5 H7 Q10.5,0.5 10.5,5 V136 Q10.5,139.5 7,139.5 H4 Q0.5,139.5 0.5,136" fill="#bcbcbc" stroke="none"/><path d="M0.5,136 V5 L4,0.8 H7.5 L10,4" fill="none" stroke="#777" stroke-width="1"/><path d="M10.5,4 V136 L7,139.5 H4 L1.5,137" fill="none" stroke="#fff" stroke-width="1"/><rect x="3" y="126" width="5" height="9.5" fill="#000"/><rect x="4" y="127" width="0.8" height="8" fill="#aaa"/></svg><div class="a" style="left:1224px;top:708px;width:1px;height:2px;background:#fff"></div><div class="a" style="left:1225px;top:709px;width:3px;height:1px;background:#555"></div><div class="a" style="left:1224px;top:739px;width:1px;height:2px;background:#fff"></div><div class="a" style="left:1225px;top:740px;width:3px;height:1px;background:#555"></div><div class="a" style="left:1224px;top:769px;width:1px;height:2px;background:#fff"></div><div class="a" style="left:1225px;top:770px;width:3px;height:1px;background:#555"></div><div class="a" style="left:1224px;top:801px;width:1px;height:2px;background:#fff"></div><div class="a" style="left:1225px;top:802px;width:3px;height:1px;background:#555"></div><div class="a" style="left:1224px;top:830px;width:1px;height:2px;background:#fff"></div><div class="a" style="left:1225px;top:831px;width:3px;height:1px;background:#555"></div><div class="t" style="left:711.6px;top:847.84px;font-size:12px;font-weight:400;font-style:normal;color:#000;letter-spacing:0.430px;font-family:'Liberation Sans',sans-serif;">29.3 MB</div><div class="t" style="left:785px;top:847.84px;font-size:12px;font-weight:400;font-style:normal;color:#000;letter-spacing:0.516px;font-family:'Liberation Sans',sans-serif;">37.4 MB</div><div class="t" style="left:863.6px;top:847.84px;font-size:12px;font-weight:400;font-style:normal;color:#000;letter-spacing:0.331px;font-family:'Liberation Sans',sans-serif;">0.3 MB</div><div class="t" style="left:959.7px;top:847.84px;font-size:12px;font-weight:400;font-style:normal;color:#000;letter-spacing:0.298px;font-family:'Liberation Sans',sans-serif;">0.4 MB</div><div class="t" style="left:1059.5px;top:847.84px;font-size:12px;font-weight:400;font-style:normal;color:#000;letter-spacing:0.662px;font-family:'Liberation Sans',sans-serif;">0.33</div><div class="t" style="left:1125.6px;top:847.84px;font-size:12px;font-weight:400;font-style:normal;color:#000;letter-spacing:0.662px;font-family:'Liberation Sans',sans-serif;">0.32</div><div class="t" style="left:1199.6px;top:847.84px;font-size:12px;font-weight:400;font-style:normal;color:#000;letter-spacing:0.612px;font-family:'Liberation Sans',sans-serif;">0.22</div><div class="t" style="left:688px;top:866.82px;font-size:12.5px;font-weight:700;font-style:normal;color:#000;letter-spacing:0.798px;font-family:'Liberation Sans',sans-serif;">Update freq.</div><div class="t" style="left:778.4px;top:867.24px;font-size:12px;font-weight:400;font-style:normal;color:#000;letter-spacing:0.000px;font-family:'Liberation Sans',sans-serif;">2</div><div class="a" style="left:778px;top:880px;width:36px;height:1px;background:#333"></div><svg class="a" style="left:778px;top:876px;" width="8" height="8" viewBox="0 0 8 8"><polygon points="4,0.5 7.5,4 4,7.5 0.5,4" fill="#444" stroke="#000" stroke-width="1"/><rect x="3.3" y="3.3" width="1.4" height="1.4" fill="#ccc"/></svg><div class="a" style="left:819px;top:867px;width:15px;height:15px;box-sizing:border-box;border-top:1px solid #fff;border-left:1px solid #fff;border-bottom:1px solid #7a7a7a;border-right:1px solid #7a7a7a;background:#cecece;"></div><div class="a" style="left:835px;top:867px;width:15px;height:15px;box-sizing:border-box;border-top:1px solid #fff;border-left:1px solid #fff;border-bottom:1px solid #7a7a7a;border-right:1px solid #7a7a7a;background:#cecece;"></div><svg class="a" style="left:822px;top:870px;" width="9" height="8" viewBox="0 0 9 8"><polygon points="4.5,0.5 8.5,7.5 0.5,7.5" fill="none" stroke="#999"/></svg><svg class="a" style="left:838px;top:870px;" width="9" height="8" viewBox="0 0 9 8"><polyline points="0.5,0.5 8.5,0.5" stroke="#555" fill="none"/><polyline points="0.8,0.8 4.5,7.5" stroke="#555" fill="none"/><polyline points="8.2,0.8 4.5,7.5" stroke="#fff" fill="none"/></svg><div class="t" style="left:880.4px;top:867.24px;font-size:12px;font-weight:400;font-style:normal;color:#000;letter-spacing:0.800px;font-family:'Liberation Sans',sans-serif;">Uptime: 0 Days 1 Hour 52 Minutes</div><div class="a" style="left:5px;top:785px;width:162px;height:182px;box-sizing:border-box;border:2px solid #000;background:#c4c4c4"></div><svg class="a" style="left:13px;top:792px;" width="15" height="15" viewBox="0 0 15 15"><rect x="0" y="0" width="15" height="15" fill="#c4c4c4" fill-opacity="0"/><polyline points="0.5,15 0.5,0.5 15,0.5" fill="none" stroke="#fff"/><polyline points="14.5,0 14.5,14.5 0,14.5" fill="none" stroke="#6e6e6e"/><polyline points="4,5.5 11.5,5.5" fill="none" stroke="#555"/><polyline points="4.5,5.5 7.5,11" fill="none" stroke="#555"/><polyline points="11,5.5 7.5,11.5" fill="none" stroke="#fff"/></svg><svg class="a" style="left:5px;top:785px;" width="11" height="11" viewBox="0 0 11 11"><polygon points="0,0 11,0 11,5 5,5 5,11 0,11" fill="#c8c8c8"/><line x1="0.0" y1="0.5" x2="11.0" y2="0.5" stroke="#ffffff" stroke-width="1"/><line x1="10.5" y1="0.0" x2="10.5" y2="5.0" stroke="#6a6a6a" stroke-width="1"/><line x1="11.0" y1="4.5" x2="5.0" y2="4.5" stroke="#6a6a6a" stroke-width="1"/><line x1="4.5" y1="5.0" x2="4.5" y2="11.0" stroke="#6a6a6a" stroke-width="1"/><line x1="5.0" y1="10.5" x2="0.0" y2="10.5" stroke="#6a6a6a" stroke-width="1"/><line x1="0.5" y1="11.0" x2="0.5" y2="0.0" stroke="#ffffff" stroke-width="1"/></svg><svg class="a" style="left:156px;top:785px;" width="11" height="11" viewBox="0 0 11 11"><polygon points="11,0 0,0 0,5 6,5 6,11 11,11" fill="#c8c8c8"/><line x1="11.0" y1="0.5" x2="0.0" y2="0.5" stroke="#ffffff" stroke-width="1"/><line x1="0.5" y1="0.0" x2="0.5" y2="5.0" stroke="#ffffff" stroke-width="1"/><line x1="0.0" y1="4.5" x2="6.0" y2="4.5" stroke="#6a6a6a" stroke-width="1"/><line x1="6.5" y1="5.0" x2="6.5" y2="11.0" stroke="#ffffff" stroke-width="1"/><line x1="6.0" y1="10.5" x2="11.0" y2="10.5" stroke="#6a6a6a" stroke-width="1"/><line x1="10.5" y1="11.0" x2="10.5" y2="0.0" stroke="#6a6a6a" stroke-width="1"/></svg><svg class="a" style="left:5px;top:956px;" width="11" height="11" viewBox="0 0 11 11"><polygon points="0,11 11,11 11,6 5,6 5,0 0,0" fill="#c8c8c8"/><line x1="0.0" y1="10.5" x2="11.0" y2="10.5" stroke="#6a6a6a" stroke-width="1"/><line x1="10.5" y1="11.0" x2="10.5" y2="6.0" stroke="#6a6a6a" stroke-width="1"/><line x1="11.0" y1="6.5" x2="5.0" y2="6.5" stroke="#ffffff" stroke-width="1"/><line x1="4.5" y1="6.0" x2="4.5" y2="0.0" stroke="#6a6a6a" stroke-width="1"/><line x1="5.0" y1="0.5" x2="0.0" y2="0.5" stroke="#ffffff" stroke-width="1"/><line x1="0.5" y1="0.0" x2="0.5" y2="11.0" stroke="#ffffff" stroke-width="1"/></svg><svg class="a" style="left:156px;top:956px;" width="11" height="11" viewBox="0 0 11 11"><polygon points="11,11 0,11 0,6 6,6 6,0 11,0" fill="#c8c8c8"/><line x1="11.0" y1="10.5" x2="0.0" y2="10.5" stroke="#6a6a6a" stroke-width="1"/><line x1="0.5" y1="11.0" x2="0.5" y2="6.0" stroke="#ffffff" stroke-width="1"/><line x1="0.0" y1="6.5" x2="6.0" y2="6.5" stroke="#ffffff" stroke-width="1"/><line x1="6.5" y1="6.0" x2="6.5" y2="0.0" stroke="#ffffff" stroke-width="1"/><line x1="6.0" y1="0.5" x2="11.0" y2="0.5" stroke="#ffffff" stroke-width="1"/><line x1="10.5" y1="0.0" x2="10.5" y2="11.0" stroke="#6a6a6a" stroke-width="1"/></svg><div class="a" style="left:33px;top:791px;width:128px;height:18px;box-sizing:border-box;border-top:1px solid #3a3a3a;border-left:1px solid #3a3a3a;border-bottom:1px solid #fff;border-right:1px solid #fff;background:#c4c4c4;"></div><div class="t" style="left:36.7px;top:792.84px;font-size:12px;font-weight:700;font-style:normal;color:#000;letter-spacing:-0.001px;font-family:'Liberation Sans',sans-serif;">Aug 24</div><div class="a" style="left:11px;top:811px;width:150px;height:150px;box-sizing:border-box;border:1px solid #000;background:#fff"></div><svg class="a" style="left:11px;top:811px;" width="150" height="150" viewBox="0 0 150 150"><defs><pattern id="chk" width="2" height="2" patternUnits="userSpaceOnUse"><rect width="1" height="1" fill="#000"/><rect x="1" y="1" width="1" height="1" fill="#000"/></pattern></defs><circle cx="75.40" cy="13.00" r="2.6" fill="#000"/><circle cx="106.40" cy="21.31" r="2.6" fill="#000"/><circle cx="129.09" cy="44.00" r="2.6" fill="#000"/><circle cx="137.40" cy="75.00" r="2.6" fill="#000"/><circle cx="129.09" cy="106.00" r="2.6" fill="#000"/><circle cx="106.40" cy="128.69" r="2.6" fill="#000"/><circle cx="75.40" cy="137.00" r="2.6" fill="#000"/><circle cx="44.40" cy="128.69" r="2.6" fill="#000"/><circle cx="21.71" cy="106.00" r="2.6" fill="#000"/><circle cx="13.40" cy="75.00" r="2.6" fill="#000"/><circle cx="21.71" cy="44.00" r="2.6" fill="#000"/><circle cx="44.40" cy="21.31" r="2.6" fill="#000"/><polygon points="64.00,73.40 70.10,86.40 128.80,52.40" fill="url(#chk)" stroke="#000" stroke-width="1.1"/><line x1="104" y1="59.5" x2="126.69999999999999" y2="47" stroke="#000" stroke-width="1.1"/></svg></body></html>
